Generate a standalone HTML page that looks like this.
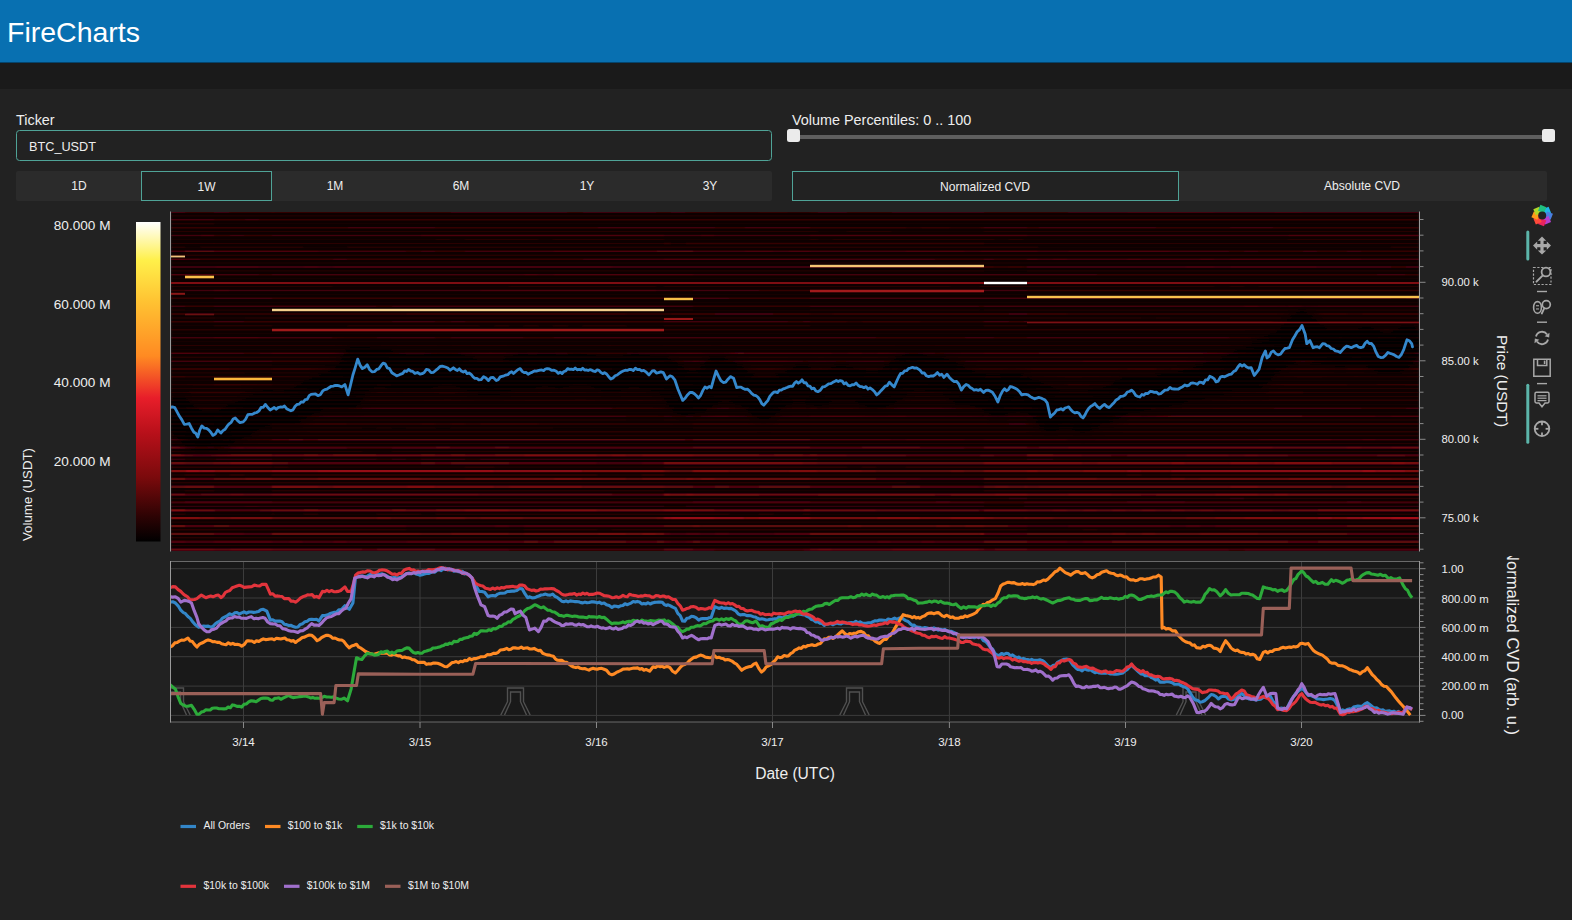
<!DOCTYPE html><html><head><meta charset="utf-8"><title>FireCharts</title>
<style>html,body{margin:0;padding:0;background:#222222;width:1572px;height:920px;overflow:hidden}svg{display:block}</style></head><body>
<svg width="1572" height="920" viewBox="0 0 1572 920" font-family='"Liberation Sans", sans-serif'>
<defs>
<linearGradient id="cb" x1="0" y1="0" x2="0" y2="1">
<stop offset="0" stop-color="#ffffff"/><stop offset="0.12" stop-color="#fff04a"/><stop offset="0.25" stop-color="#ffc232"/>
<stop offset="0.42" stop-color="#ff8a22"/><stop offset="0.55" stop-color="#e81e2a"/><stop offset="0.66" stop-color="#b8101a"/>
<stop offset="0.8" stop-color="#7a0a0c"/><stop offset="0.92" stop-color="#2e0304"/><stop offset="1" stop-color="#000000"/>
</linearGradient>
<filter id="halo" x="-0.1" y="-1" width="1.2" height="3"><feGaussianBlur stdDeviation="7"/></filter>
<filter id="hblur" x="0" y="0" width="1" height="1"><feGaussianBlur stdDeviation="1.0 0.6"/></filter>
<clipPath id="hclip"><rect x="171" y="212" width="1248" height="339"/></clipPath>
<clipPath id="cclip"><rect x="171" y="562" width="1248" height="160"/></clipPath>
<clipPath id="tclip"><rect x="1480" y="556" width="60" height="200"/></clipPath>
</defs>
<rect width="1572" height="920" fill="#222222"/>
<rect width="1572" height="63" fill="#0870b1"/>
<rect y="62.2" width="1572" height="0.8" fill="#063a5c"/>
<rect y="63" width="1572" height="26" fill="#1a1a1a"/>
<text x="7" y="42" font-size="28.5" fill="#ffffff">FireCharts</text>
<text x="16" y="124.7" font-size="14.4" fill="#eeeeee">Ticker</text>
<rect x="16.5" y="130.5" width="755" height="30" rx="3" fill="#222222" stroke="#4fa397" stroke-width="1"/>
<text x="29" y="151" font-size="12.7" fill="#eeeeee">BTC_USDT</text>
<rect x="16" y="171" width="756" height="30" rx="2" fill="#2b2b2b"/>
<rect x="141.5" y="171.5" width="130" height="29" fill="#222222" stroke="#4fa397" stroke-width="1"/>

<text x="79" y="189.9" font-size="12" fill="#eeeeee" text-anchor="middle">1D</text>
<text x="206.5" y="190.8" font-size="12" fill="#eeeeee" text-anchor="middle">1W</text>
<text x="335" y="189.9" font-size="12" fill="#eeeeee" text-anchor="middle">1M</text>
<text x="461" y="189.9" font-size="12" fill="#eeeeee" text-anchor="middle">6M</text>
<text x="587" y="189.9" font-size="12" fill="#eeeeee" text-anchor="middle">1Y</text>
<text x="710" y="189.9" font-size="12" fill="#eeeeee" text-anchor="middle">3Y</text>
<text x="792" y="125.4" font-size="14.4" fill="#eeeeee">Volume Percentiles: 0 .. 100</text>
<rect x="794" y="135" width="755" height="4" fill="#5f5f5f"/>
<rect x="787" y="129" width="13" height="13" rx="2.5" fill="#ebebeb"/>
<rect x="1542" y="129" width="13" height="13" rx="2.5" fill="#ebebeb"/>
<rect x="792" y="171" width="755" height="30" rx="2" fill="#2b2b2b"/>
<rect x="792.5" y="171.5" width="386" height="29" fill="#222222" stroke="#4fa397" stroke-width="1"/>
<text x="985" y="191.2" font-size="12.1" fill="#eeeeee" text-anchor="middle">Normalized CVD</text>
<text x="1362" y="190.2" font-size="12.1" fill="#eeeeee" text-anchor="middle">Absolute CVD</text>
<g clip-path="url(#hclip)"><g filter="url(#hblur)"><rect x="171" y="212" width="1248" height="339" fill="#0a0002"/>
<path fill="rgb(25,1,3)" d="M214 223.1h1205.0v1.4h-1205.0zM817.8 230.9h29.4v1.4h-29.4zM891.3 230.9h92.7v1.4h-92.7zM171 238.8h264.6v1.4h-264.6zM450.3 238.8h14.7v1.4h-14.7zM538.5 238.8h14.7v1.4h-14.7zM664 238.8h146.0v1.4h-146.0zM817.8 238.8h14.7v1.4h-14.7zM994.2 238.8h14.7v1.4h-14.7zM1023.6 238.8h264.6v1.4h-264.6zM185 246.6h15.4v1.4h-15.4zM303.3 246.6h44.1v1.4h-44.1zM1038.3 246.6h352.8v1.4h-352.8zM171 262.3h1248.0v1.4h-1248.0zM984 270.2h43.0v1.4h-43.0zM171 278.0h1248.0v1.4h-1248.0zM332.7 285.9h176.4v1.4h-176.4zM656.1 285.9h7.9v1.4h-7.9zM950.1 285.9h29.4v1.4h-29.4zM1214.7 285.9h14.7v1.4h-14.7zM1244.1 285.9h14.7v1.4h-14.7zM171 293.7h1248.0v1.4h-1248.0zM171 301.6h1248.0v1.4h-1248.0zM185 309.4h29.0v1.4h-29.0zM693 309.4h117.0v1.4h-117.0zM979.5 309.4h4.5v1.4h-4.5zM215.1 317.3h29.4v1.4h-29.4zM1141.2 317.3h14.7v1.4h-14.7zM1170.6 317.3h58.8v1.4h-58.8zM171 325.1h43.0v1.4h-43.0zM272 325.1h75.4v1.4h-75.4zM479.7 325.1h14.7v1.4h-14.7zM509.1 325.1h14.7v1.4h-14.7zM538.5 325.1h14.7v1.4h-14.7zM567.9 325.1h14.7v1.4h-14.7zM626.7 325.1h37.3v1.4h-37.3zM810 325.1h174.0v1.4h-174.0zM1027 325.1h392.0v1.4h-392.0zM171 333.0h1248.0v1.4h-1248.0zM171 340.8h1248.0v1.4h-1248.0zM171 348.7h1248.0v1.4h-1248.0zM272 364.4h237.1v1.4h-237.1zM664 364.4h6.8v1.4h-6.8zM244.5 372.2h27.5v1.4h-27.5zM171 380.1h1248.0v1.4h-1248.0zM171 403.6h1248.0v1.4h-1248.0zM171 411.5h1248.0v1.4h-1248.0zM626.7 419.3h37.3v1.4h-37.3zM214 427.2h58.0v1.4h-58.0zM362.1 427.2h14.7v1.4h-14.7zM391.5 427.2h14.7v1.4h-14.7zM435.6 427.2h14.7v1.4h-14.7zM553.2 427.2h139.8v1.4h-139.8zM362.1 450.7h29.4v1.4h-29.4zM906 482.1h78.0v1.4h-78.0zM171 490.0h14.0v1.4h-14.0zM214 490.0h58.0v1.4h-58.0zM664 490.0h320.0v1.4h-320.0zM185.7 513.5h86.3v1.4h-86.3zM273.9 513.5h29.4v1.4h-29.4zM318 513.5h58.8v1.4h-58.8zM420.9 513.5h14.7v1.4h-14.7zM729.6 513.5h29.4v1.4h-29.4zM773.7 513.5h29.4v1.4h-29.4zM810 513.5h507.6v1.4h-507.6zM171 560.6h1248.0v1.4h-1248.0z"/>
<path fill="rgb(38,2,5)" d="M171 215.2h1248.0v1.4h-1248.0zM171 223.1h43.0v1.4h-43.0zM171 230.9h646.8v1.4h-646.8zM847.2 230.9h44.1v1.4h-44.1zM984 230.9h435.0v1.4h-435.0zM435.6 238.8h14.7v1.4h-14.7zM465 238.8h73.5v1.4h-73.5zM553.2 238.8h110.8v1.4h-110.8zM810 238.8h7.8v1.4h-7.8zM832.5 238.8h161.7v1.4h-161.7zM1008.9 238.8h14.7v1.4h-14.7zM1288.2 238.8h130.8v1.4h-130.8zM171 246.6h14.0v1.4h-14.0zM200.4 246.6h102.9v1.4h-102.9zM347.4 246.6h690.9v1.4h-690.9zM1391.1 246.6h27.9v1.4h-27.9zM171 254.5h1248.0v1.4h-1248.0zM171 270.2h813.0v1.4h-813.0zM1027 270.2h392.0v1.4h-392.0zM171 285.9h161.7v1.4h-161.7zM509.1 285.9h147.0v1.4h-147.0zM664 285.9h286.1v1.4h-286.1zM979.5 285.9h235.2v1.4h-235.2zM1229.4 285.9h14.7v1.4h-14.7zM1258.8 285.9h160.2v1.4h-160.2zM171 309.4h14.0v1.4h-14.0zM214 309.4h479.0v1.4h-479.0zM810 309.4h169.5v1.4h-169.5zM984 309.4h435.0v1.4h-435.0zM171 317.3h44.1v1.4h-44.1zM244.5 317.3h896.7v1.4h-896.7zM1155.9 317.3h14.7v1.4h-14.7zM1229.4 317.3h189.6v1.4h-189.6zM214 325.1h58.0v1.4h-58.0zM347.4 325.1h132.3v1.4h-132.3zM494.4 325.1h14.7v1.4h-14.7zM523.8 325.1h14.7v1.4h-14.7zM553.2 325.1h14.7v1.4h-14.7zM582.6 325.1h44.1v1.4h-44.1zM664 325.1h146.0v1.4h-146.0zM984 325.1h43.0v1.4h-43.0zM171 356.5h1248.0v1.4h-1248.0zM171 364.4h101.0v1.4h-101.0zM509.1 364.4h154.9v1.4h-154.9zM670.8 364.4h748.2v1.4h-748.2zM171 372.2h73.5v1.4h-73.5zM272 372.2h1147.0v1.4h-1147.0zM171 387.9h1248.0v1.4h-1248.0zM171 395.8h1248.0v1.4h-1248.0zM171 419.3h455.7v1.4h-455.7zM664 419.3h755.0v1.4h-755.0zM171 427.2h43.0v1.4h-43.0zM272 427.2h90.1v1.4h-90.1zM376.8 427.2h14.7v1.4h-14.7zM406.2 427.2h29.4v1.4h-29.4zM450.3 427.2h102.9v1.4h-102.9zM693 427.2h726.0v1.4h-726.0zM171 435.0h1248.0v1.4h-1248.0zM171 442.9h1248.0v1.4h-1248.0zM171 450.7h191.1v1.4h-191.1zM391.5 450.7h1027.5v1.4h-1027.5zM185 458.6h30.1v1.4h-30.1zM272 458.6h31.3v1.4h-31.3zM376.8 458.6h14.7v1.4h-14.7zM406.2 458.6h14.7v1.4h-14.7zM465 458.6h14.7v1.4h-14.7zM817.8 458.6h209.2v1.4h-209.2zM1053 458.6h366.0v1.4h-366.0zM272 466.4h1.9v1.4h-1.9zM288.6 466.4h176.4v1.4h-176.4zM494.4 466.4h169.6v1.4h-169.6zM847.2 466.4h14.7v1.4h-14.7zM876.6 466.4h29.4v1.4h-29.4zM171 474.3h14.0v1.4h-14.0zM215.1 474.3h14.7v1.4h-14.7zM244.5 474.3h27.5v1.4h-27.5zM597.3 474.3h44.1v1.4h-44.1zM664 474.3h462.5v1.4h-462.5zM1141.2 474.3h29.4v1.4h-29.4zM171 482.1h735.0v1.4h-735.0zM984 482.1h435.0v1.4h-435.0zM185 490.0h29.0v1.4h-29.0zM272 490.0h392.0v1.4h-392.0zM984 490.0h435.0v1.4h-435.0zM171 497.8h837.9v1.4h-837.9zM1027 497.8h202.4v1.4h-202.4zM1244.1 497.8h174.9v1.4h-174.9zM664 505.7h21.5v1.4h-21.5zM984 505.7h39.6v1.4h-39.6zM171 513.5h14.7v1.4h-14.7zM272 513.5h1.9v1.4h-1.9zM303.3 513.5h14.7v1.4h-14.7zM376.8 513.5h44.1v1.4h-44.1zM435.6 513.5h294.0v1.4h-294.0zM759 513.5h14.7v1.4h-14.7zM803.1 513.5h6.9v1.4h-6.9zM1317.6 513.5h101.4v1.4h-101.4zM171 521.4h1248.0v1.4h-1248.0zM406.2 529.2h117.6v1.4h-117.6zM597.3 529.2h14.7v1.4h-14.7zM1027 529.2h55.4v1.4h-55.4zM1097.1 529.2h132.3v1.4h-132.3zM171 537.1h1248.0v1.4h-1248.0zM171 544.9h1248.0v1.4h-1248.0zM214 552.8h15.8v1.4h-15.8zM273.9 552.8h390.1v1.4h-390.1zM670.8 552.8h14.7v1.4h-14.7zM693 552.8h117.0v1.4h-117.0zM861.9 552.8h14.7v1.4h-14.7zM984 552.8h435.0v1.4h-435.0z"/>
<path fill="rgb(52,3,7)" d="M171 458.6h14.0v1.4h-14.0zM215.1 458.6h56.9v1.4h-56.9zM303.3 458.6h73.5v1.4h-73.5zM391.5 458.6h14.7v1.4h-14.7zM420.9 458.6h44.1v1.4h-44.1zM479.7 458.6h338.1v1.4h-338.1zM1027 458.6h26.0v1.4h-26.0zM171 466.4h101.0v1.4h-101.0zM273.9 466.4h14.7v1.4h-14.7zM465 466.4h29.4v1.4h-29.4zM664 466.4h183.2v1.4h-183.2zM861.9 466.4h14.7v1.4h-14.7zM906 466.4h513.0v1.4h-513.0zM185 474.3h30.1v1.4h-30.1zM229.8 474.3h14.7v1.4h-14.7zM272 474.3h325.3v1.4h-325.3zM641.4 474.3h22.6v1.4h-22.6zM1126.5 474.3h14.7v1.4h-14.7zM1170.6 474.3h248.4v1.4h-248.4zM1008.9 497.8h18.1v1.4h-18.1zM1229.4 497.8h14.7v1.4h-14.7zM171 505.7h73.5v1.4h-73.5zM259.2 505.7h404.8v1.4h-404.8zM685.5 505.7h298.5v1.4h-298.5zM1023.6 505.7h395.4v1.4h-395.4zM171 529.2h235.2v1.4h-235.2zM523.8 529.2h73.5v1.4h-73.5zM612 529.2h415.0v1.4h-415.0zM1082.4 529.2h14.7v1.4h-14.7zM1229.4 529.2h189.6v1.4h-189.6zM171 552.8h43.0v1.4h-43.0zM229.8 552.8h44.1v1.4h-44.1zM664 552.8h6.8v1.4h-6.8zM685.5 552.8h7.5v1.4h-7.5zM810 552.8h51.9v1.4h-51.9zM876.6 552.8h107.4v1.4h-107.4z"/>
<path fill="rgb(65,5,9)" d="M244.5 505.7h14.7v1.4h-14.7z"/>
<path fill="rgb(42,2,4)" d="M906 226.9h14.7v1.5h-14.7zM950.1 226.9h29.4v1.5h-29.4zM171 242.7h43.0v1.5h-43.0zM215.1 242.7h448.9v1.5h-448.9zM670.8 242.7h14.7v1.5h-14.7zM984 242.7h435.0v1.5h-435.0zM171 281.9h14.0v1.5h-14.0zM272 281.9h413.5v1.5h-413.5zM693 281.9h7.2v1.5h-7.2zM714.9 281.9h14.7v1.5h-14.7zM810 281.9h37.2v1.5h-37.2zM861.9 281.9h122.1v1.5h-122.1zM1027 281.9h392.0v1.5h-392.0zM847.2 321.1h14.7v1.5h-14.7zM920.7 321.1h63.3v1.5h-63.3zM1273.5 321.1h44.1v1.5h-44.1zM171 329.0h1248.0v1.5h-1248.0zM171 344.7h1248.0v1.5h-1248.0zM185 376.1h479.0v1.5h-479.0zM803.1 376.1h6.9v1.5h-6.9zM1027 376.1h392.0v1.5h-392.0zM171 383.9h43.0v1.5h-43.0zM272 383.9h104.8v1.5h-104.8zM391.5 383.9h272.5v1.5h-272.5zM693 383.9h198.3v1.5h-198.3zM984 383.9h24.9v1.5h-24.9zM1053 383.9h14.7v1.5h-14.7zM1111.8 383.9h14.7v1.5h-14.7zM1214.7 383.9h44.1v1.5h-44.1zM1347 383.9h29.4v1.5h-29.4zM332.7 391.8h44.1v1.5h-44.1zM567.9 391.8h29.4v1.5h-29.4zM626.7 391.8h58.8v1.5h-58.8zM847.2 391.8h14.7v1.5h-14.7zM1302.9 391.8h116.1v1.5h-116.1zM171 399.6h514.5v1.5h-514.5zM693 399.6h51.3v1.5h-51.3zM759 399.6h14.7v1.5h-14.7zM810 399.6h609.0v1.5h-609.0zM171 431.0h1248.0v1.5h-1248.0z"/>
<path fill="rgb(54,3,6)" d="M714.9 211.2h44.1v1.5h-44.1zM788.4 211.2h21.6v1.5h-21.6zM214 219.1h30.5v1.5h-30.5zM259.2 219.1h1159.8v1.5h-1159.8zM171 226.9h176.4v1.5h-176.4zM435.6 226.9h161.7v1.5h-161.7zM714.9 226.9h29.4v1.5h-29.4zM810 226.9h96.0v1.5h-96.0zM920.7 226.9h29.4v1.5h-29.4zM979.5 226.9h4.5v1.5h-4.5zM1027 226.9h11.3v1.5h-11.3zM1155.9 226.9h73.5v1.5h-73.5zM1273.5 226.9h145.5v1.5h-145.5zM214 234.8h15.8v1.5h-15.8zM244.5 234.8h27.5v1.5h-27.5zM214 242.7h1.1v1.5h-1.1zM664 242.7h6.8v1.5h-6.8zM685.5 242.7h298.5v1.5h-298.5zM406.2 250.5h14.7v1.5h-14.7zM435.6 250.5h29.4v1.5h-29.4zM1229.4 250.5h14.7v1.5h-14.7zM1258.8 250.5h44.1v1.5h-44.1zM1317.6 250.5h29.4v1.5h-29.4zM1361.7 250.5h57.3v1.5h-57.3zM200.4 258.4h132.3v1.5h-132.3zM347.4 258.4h235.2v1.5h-235.2zM935.4 258.4h48.6v1.5h-48.6zM994.2 258.4h32.8v1.5h-32.8zM994.2 266.2h14.7v1.5h-14.7zM1023.6 266.2h3.4v1.5h-3.4zM259.2 274.1h12.8v1.5h-12.8zM1097.1 274.1h279.3v1.5h-279.3zM1405.8 274.1h13.2v1.5h-13.2zM185 281.9h87.0v1.5h-87.0zM685.5 281.9h7.5v1.5h-7.5zM700.2 281.9h14.7v1.5h-14.7zM729.6 281.9h80.4v1.5h-80.4zM847.2 281.9h14.7v1.5h-14.7zM984 281.9h43.0v1.5h-43.0zM171 289.8h14.0v1.5h-14.0zM670.8 289.8h22.2v1.5h-22.2zM759 289.8h51.0v1.5h-51.0zM1027 289.8h392.0v1.5h-392.0zM171 297.6h43.0v1.5h-43.0zM272 297.6h421.0v1.5h-421.0zM729.6 297.6h80.4v1.5h-80.4zM1111.8 297.6h191.1v1.5h-191.1zM1391.1 297.6h14.7v1.5h-14.7zM185 305.4h29.0v1.5h-29.0zM376.8 305.4h14.7v1.5h-14.7zM693 305.4h117.0v1.5h-117.0zM979.5 305.4h4.5v1.5h-4.5zM214 313.3h192.2v1.5h-192.2zM626.7 313.3h44.1v1.5h-44.1zM810 313.3h22.5v1.5h-22.5zM1067.7 313.3h249.9v1.5h-249.9zM1347 313.3h14.7v1.5h-14.7zM171 321.1h43.0v1.5h-43.0zM244.5 321.1h147.0v1.5h-147.0zM435.6 321.1h14.7v1.5h-14.7zM465 321.1h199.0v1.5h-199.0zM788.4 321.1h14.7v1.5h-14.7zM810 321.1h37.2v1.5h-37.2zM861.9 321.1h58.8v1.5h-58.8zM1008.9 321.1h14.7v1.5h-14.7zM1027 321.1h246.5v1.5h-246.5zM1317.6 321.1h101.4v1.5h-101.4zM332.7 336.9h44.1v1.5h-44.1zM435.6 336.9h14.7v1.5h-14.7zM523.8 336.9h29.4v1.5h-29.4zM876.6 336.9h88.2v1.5h-88.2zM994.2 336.9h32.8v1.5h-32.8zM1229.4 336.9h189.6v1.5h-189.6zM244.5 352.5h14.7v1.5h-14.7zM272 360.4h251.8v1.5h-251.8zM664 360.4h6.8v1.5h-6.8zM891.3 360.4h14.7v1.5h-14.7zM950.1 360.4h14.7v1.5h-14.7zM229.8 368.2h42.2v1.5h-42.2zM362.1 368.2h29.4v1.5h-29.4zM538.5 368.2h58.8v1.5h-58.8zM612 368.2h14.7v1.5h-14.7zM171 376.1h14.0v1.5h-14.0zM664 376.1h139.1v1.5h-139.1zM810 376.1h217.0v1.5h-217.0zM214 383.9h58.0v1.5h-58.0zM376.8 383.9h14.7v1.5h-14.7zM664 383.9h29.0v1.5h-29.0zM891.3 383.9h92.7v1.5h-92.7zM1008.9 383.9h44.1v1.5h-44.1zM1067.7 383.9h44.1v1.5h-44.1zM1126.5 383.9h88.2v1.5h-88.2zM1258.8 383.9h88.2v1.5h-88.2zM1376.4 383.9h42.6v1.5h-42.6zM171 391.8h88.2v1.5h-88.2zM272 391.8h60.7v1.5h-60.7zM376.8 391.8h191.1v1.5h-191.1zM597.3 391.8h29.4v1.5h-29.4zM685.5 391.8h161.7v1.5h-161.7zM861.9 391.8h441.0v1.5h-441.0zM685.5 399.6h7.5v1.5h-7.5zM744.3 399.6h14.7v1.5h-14.7zM773.7 399.6h36.3v1.5h-36.3zM185 407.5h0.7v1.5h-0.7zM272 407.5h75.4v1.5h-75.4zM612 407.5h81.0v1.5h-81.0zM729.6 407.5h80.4v1.5h-80.4zM817.8 407.5h58.8v1.5h-58.8zM1038.3 407.5h73.5v1.5h-73.5zM1155.9 407.5h117.6v1.5h-117.6zM1361.7 407.5h44.1v1.5h-44.1zM626.7 415.4h37.3v1.5h-37.3zM214 423.2h58.0v1.5h-58.0zM347.4 423.2h73.5v1.5h-73.5zM435.6 423.2h14.7v1.5h-14.7zM465 423.2h14.7v1.5h-14.7zM538.5 423.2h154.5v1.5h-154.5zM229.8 438.9h42.2v1.5h-42.2zM984 501.3h39.6v2.3h-39.6z"/>
<path fill="rgb(66,4,8)" d="M185 211.2h29.0v1.5h-29.0zM229.8 211.2h42.2v1.5h-42.2zM273.9 211.2h176.4v1.5h-176.4zM567.9 211.2h14.7v1.5h-14.7zM656.1 211.2h14.7v1.5h-14.7zM685.5 211.2h29.4v1.5h-29.4zM759 211.2h29.4v1.5h-29.4zM810 211.2h7.8v1.5h-7.8zM847.2 211.2h44.1v1.5h-44.1zM984 211.2h83.7v1.5h-83.7zM171 219.1h43.0v1.5h-43.0zM244.5 219.1h14.7v1.5h-14.7zM347.4 226.9h88.2v1.5h-88.2zM597.3 226.9h117.6v1.5h-117.6zM744.3 226.9h65.7v1.5h-65.7zM984 226.9h43.0v1.5h-43.0zM1038.3 226.9h117.6v1.5h-117.6zM1229.4 226.9h44.1v1.5h-44.1zM171 234.8h29.4v1.5h-29.4zM229.8 234.8h14.7v1.5h-14.7zM272 234.8h148.9v1.5h-148.9zM664 234.8h36.2v1.5h-36.2zM714.9 234.8h95.1v1.5h-95.1zM1027 234.8h261.2v1.5h-261.2zM171 250.5h14.0v1.5h-14.0zM318 250.5h88.2v1.5h-88.2zM420.9 250.5h14.7v1.5h-14.7zM465 250.5h88.2v1.5h-88.2zM693 250.5h51.3v1.5h-51.3zM773.7 250.5h14.7v1.5h-14.7zM810 250.5h96.0v1.5h-96.0zM964.8 250.5h14.7v1.5h-14.7zM1038.3 250.5h29.4v1.5h-29.4zM1170.6 250.5h58.8v1.5h-58.8zM1244.1 250.5h14.7v1.5h-14.7zM1302.9 250.5h14.7v1.5h-14.7zM1347 250.5h14.7v1.5h-14.7zM185 258.4h15.4v1.5h-15.4zM332.7 258.4h14.7v1.5h-14.7zM582.6 258.4h81.4v1.5h-81.4zM810 258.4h125.4v1.5h-125.4zM984 258.4h10.2v1.5h-10.2zM1038.3 258.4h14.7v1.5h-14.7zM1067.7 258.4h58.8v1.5h-58.8zM1141.2 258.4h58.8v1.5h-58.8zM1214.7 258.4h14.7v1.5h-14.7zM1361.7 258.4h57.3v1.5h-57.3zM984 266.2h10.2v1.5h-10.2zM1008.9 266.2h14.7v1.5h-14.7zM1391.1 266.2h14.7v1.5h-14.7zM214 274.1h45.2v1.5h-45.2zM272 274.1h251.8v1.5h-251.8zM538.5 274.1h14.7v1.5h-14.7zM693 274.1h404.1v1.5h-404.1zM1376.4 274.1h29.4v1.5h-29.4zM185 289.8h29.0v1.5h-29.0zM229.8 289.8h249.9v1.5h-249.9zM656.1 289.8h14.7v1.5h-14.7zM693 289.8h66.0v1.5h-66.0zM810 289.8h81.3v1.5h-81.3zM920.7 289.8h58.8v1.5h-58.8zM984 289.8h43.0v1.5h-43.0zM214 297.6h58.0v1.5h-58.0zM693 297.6h36.6v1.5h-36.6zM810 297.6h301.8v1.5h-301.8zM1302.9 297.6h88.2v1.5h-88.2zM1405.8 297.6h13.2v1.5h-13.2zM171 305.4h14.0v1.5h-14.0zM214 305.4h162.8v1.5h-162.8zM391.5 305.4h301.5v1.5h-301.5zM810 305.4h169.5v1.5h-169.5zM984 305.4h260.1v1.5h-260.1zM1258.8 305.4h29.4v1.5h-29.4zM1302.9 305.4h116.1v1.5h-116.1zM171 313.3h14.7v1.5h-14.7zM406.2 313.3h220.5v1.5h-220.5zM670.8 313.3h44.1v1.5h-44.1zM773.7 313.3h36.3v1.5h-36.3zM832.5 313.3h176.4v1.5h-176.4zM1027 313.3h40.7v1.5h-40.7zM1317.6 313.3h29.4v1.5h-29.4zM1361.7 313.3h57.3v1.5h-57.3zM214 321.1h30.5v1.5h-30.5zM391.5 321.1h44.1v1.5h-44.1zM450.3 321.1h14.7v1.5h-14.7zM664 321.1h124.4v1.5h-124.4zM803.1 321.1h6.9v1.5h-6.9zM984 321.1h24.9v1.5h-24.9zM1023.6 321.1h3.4v1.5h-3.4zM171 336.9h43.0v1.5h-43.0zM259.2 336.9h73.5v1.5h-73.5zM376.8 336.9h58.8v1.5h-58.8zM450.3 336.9h73.5v1.5h-73.5zM553.2 336.9h323.4v1.5h-323.4zM964.8 336.9h29.4v1.5h-29.4zM1027 336.9h202.4v1.5h-202.4zM200.4 352.5h44.1v1.5h-44.1zM259.2 352.5h12.8v1.5h-12.8zM567.9 352.5h58.8v1.5h-58.8zM832.5 352.5h14.7v1.5h-14.7zM861.9 352.5h14.7v1.5h-14.7zM935.4 352.5h48.6v1.5h-48.6zM171 360.4h101.0v1.5h-101.0zM523.8 360.4h140.2v1.5h-140.2zM670.8 360.4h22.2v1.5h-22.2zM803.1 360.4h88.2v1.5h-88.2zM906 360.4h44.1v1.5h-44.1zM964.8 360.4h117.6v1.5h-117.6zM171 368.2h58.8v1.5h-58.8zM272 368.2h90.1v1.5h-90.1zM391.5 368.2h147.0v1.5h-147.0zM597.3 368.2h14.7v1.5h-14.7zM626.7 368.2h183.3v1.5h-183.3zM847.2 368.2h44.1v1.5h-44.1zM906 368.2h220.5v1.5h-220.5zM1155.9 368.2h14.7v1.5h-14.7zM1244.1 368.2h14.7v1.5h-14.7zM1288.2 368.2h58.8v1.5h-58.8zM259.2 391.8h12.8v1.5h-12.8zM171 407.5h14.0v1.5h-14.0zM185.7 407.5h86.3v1.5h-86.3zM347.4 407.5h264.6v1.5h-264.6zM693 407.5h36.6v1.5h-36.6zM810 407.5h7.8v1.5h-7.8zM876.6 407.5h161.7v1.5h-161.7zM1111.8 407.5h44.1v1.5h-44.1zM1273.5 407.5h88.2v1.5h-88.2zM1405.8 407.5h13.2v1.5h-13.2zM171 415.4h14.0v1.5h-14.0zM200.4 415.4h13.6v1.5h-13.6zM272 415.4h354.7v1.5h-354.7zM664 415.4h21.5v1.5h-21.5zM693 415.4h7.2v1.5h-7.2zM729.6 415.4h80.4v1.5h-80.4zM906 415.4h78.0v1.5h-78.0zM1376.4 415.4h14.7v1.5h-14.7zM171 423.2h29.4v1.5h-29.4zM272 423.2h75.4v1.5h-75.4zM420.9 423.2h14.7v1.5h-14.7zM450.3 423.2h14.7v1.5h-14.7zM479.7 423.2h58.8v1.5h-58.8zM693 423.2h315.9v1.5h-315.9zM1027 423.2h392.0v1.5h-392.0zM185 438.9h44.8v1.5h-44.8zM891.3 438.9h14.7v1.5h-14.7zM964.8 438.9h19.2v1.5h-19.2zM1067.7 438.9h191.1v1.5h-191.1zM1332.3 438.9h29.4v1.5h-29.4zM1376.4 438.9h42.6v1.5h-42.6zM347.4 446.4h44.1v2.3h-44.1zM964.8 446.4h19.2v2.3h-19.2zM597.3 462.1h44.1v2.3h-44.1zM920.7 477.8h63.3v2.3h-63.3zM979.5 485.6h4.5v2.3h-4.5zM171 501.3h14.0v2.3h-14.0zM272 501.3h421.0v2.3h-421.0zM810 501.3h125.4v2.3h-125.4zM950.1 501.3h33.9v2.3h-33.9zM1023.6 501.3h102.9v2.3h-102.9zM1185.3 501.3h161.7v2.3h-161.7zM1361.7 501.3h57.3v2.3h-57.3zM406.2 524.9h88.2v2.3h-88.2zM509.1 524.9h14.7v2.3h-14.7zM1027 524.9h40.7v2.3h-40.7zM1170.6 524.9h14.7v2.3h-14.7zM1200 524.9h14.7v2.3h-14.7zM244.5 532.7h27.5v2.3h-27.5zM670.8 532.7h14.7v2.3h-14.7zM700.2 532.7h14.7v2.3h-14.7zM729.6 532.7h44.1v2.3h-44.1zM185 540.6h29.0v2.3h-29.0zM272 540.6h16.6v2.3h-16.6zM303.3 540.6h29.4v2.3h-29.4zM347.4 540.6h58.8v2.3h-58.8zM670.8 540.6h14.7v2.3h-14.7zM810 540.6h66.6v2.3h-66.6zM891.3 540.6h29.4v2.3h-29.4zM935.4 540.6h48.6v2.3h-48.6zM1067.7 540.6h14.7v2.3h-14.7zM509.1 548.4h154.9v2.3h-154.9zM714.9 548.4h88.2v2.3h-88.2zM1229.4 548.4h14.7v2.3h-14.7zM200.4 556.2h13.6v2.3h-13.6z"/>
<path fill="rgb(78,6,10)" d="M214 211.2h15.8v1.5h-15.8zM272 211.2h1.9v1.5h-1.9zM450.3 211.2h117.6v1.5h-117.6zM582.6 211.2h73.5v1.5h-73.5zM670.8 211.2h14.7v1.5h-14.7zM817.8 211.2h29.4v1.5h-29.4zM891.3 211.2h92.7v1.5h-92.7zM1067.7 211.2h58.8v1.5h-58.8zM1214.7 211.2h58.8v1.5h-58.8zM1302.9 211.2h116.1v1.5h-116.1zM200.4 234.8h13.6v1.5h-13.6zM420.9 234.8h243.1v1.5h-243.1zM700.2 234.8h14.7v1.5h-14.7zM810 234.8h217.0v1.5h-217.0zM1288.2 234.8h130.8v1.5h-130.8zM214 250.5h104.0v1.5h-104.0zM553.2 250.5h102.9v1.5h-102.9zM744.3 250.5h29.4v1.5h-29.4zM788.4 250.5h21.6v1.5h-21.6zM906 250.5h58.8v1.5h-58.8zM979.5 250.5h58.8v1.5h-58.8zM1067.7 250.5h102.9v1.5h-102.9zM171 258.4h14.0v1.5h-14.0zM664 258.4h146.0v1.5h-146.0zM1027 258.4h11.3v1.5h-11.3zM1053 258.4h14.7v1.5h-14.7zM1126.5 258.4h14.7v1.5h-14.7zM1200 258.4h14.7v1.5h-14.7zM1229.4 258.4h132.3v1.5h-132.3zM171 266.2h44.1v1.5h-44.1zM259.2 266.2h44.1v1.5h-44.1zM318 266.2h14.7v1.5h-14.7zM612 266.2h323.4v1.5h-323.4zM950.1 266.2h14.7v1.5h-14.7zM1027 266.2h158.3v1.5h-158.3zM1214.7 266.2h14.7v1.5h-14.7zM1317.6 266.2h73.5v1.5h-73.5zM1405.8 266.2h13.2v1.5h-13.2zM171 274.1h43.0v1.5h-43.0zM523.8 274.1h14.7v1.5h-14.7zM553.2 274.1h139.8v1.5h-139.8zM214 289.8h15.8v1.5h-15.8zM479.7 289.8h176.4v1.5h-176.4zM891.3 289.8h29.4v1.5h-29.4zM979.5 289.8h4.5v1.5h-4.5zM1244.1 305.4h14.7v1.5h-14.7zM1288.2 305.4h14.7v1.5h-14.7zM185.7 313.3h28.3v1.5h-28.3zM714.9 313.3h58.8v1.5h-58.8zM1008.9 313.3h18.1v1.5h-18.1zM214 336.9h45.2v1.5h-45.2zM171 352.5h29.4v1.5h-29.4zM272 352.5h295.9v1.5h-295.9zM626.7 352.5h102.9v1.5h-102.9zM744.3 352.5h88.2v1.5h-88.2zM847.2 352.5h14.7v1.5h-14.7zM876.6 352.5h58.8v1.5h-58.8zM984 352.5h54.3v1.5h-54.3zM1258.8 352.5h14.7v1.5h-14.7zM1391.1 352.5h14.7v1.5h-14.7zM693 360.4h110.1v1.5h-110.1zM1082.4 360.4h336.6v1.5h-336.6zM810 368.2h37.2v1.5h-37.2zM891.3 368.2h14.7v1.5h-14.7zM1126.5 368.2h29.4v1.5h-29.4zM1170.6 368.2h73.5v1.5h-73.5zM1258.8 368.2h29.4v1.5h-29.4zM1347 368.2h72.0v1.5h-72.0zM185 415.4h15.4v1.5h-15.4zM214 415.4h58.0v1.5h-58.0zM685.5 415.4h7.5v1.5h-7.5zM700.2 415.4h29.4v1.5h-29.4zM810 415.4h96.0v1.5h-96.0zM984 415.4h43.0v1.5h-43.0zM1053 415.4h58.8v1.5h-58.8zM1141.2 415.4h14.7v1.5h-14.7zM1302.9 415.4h73.5v1.5h-73.5zM1391.1 415.4h27.9v1.5h-27.9zM200.4 423.2h13.6v1.5h-13.6zM1008.9 423.2h18.1v1.5h-18.1zM171 438.9h14.0v1.5h-14.0zM272 438.9h16.6v1.5h-16.6zM303.3 438.9h14.7v1.5h-14.7zM685.5 438.9h7.5v1.5h-7.5zM810 438.9h81.3v1.5h-81.3zM906 438.9h58.8v1.5h-58.8zM984 438.9h83.7v1.5h-83.7zM1258.8 438.9h73.5v1.5h-73.5zM1361.7 438.9h14.7v1.5h-14.7zM214 446.4h15.8v2.3h-15.8zM244.5 446.4h102.9v2.3h-102.9zM391.5 446.4h44.1v2.3h-44.1zM450.3 446.4h44.1v2.3h-44.1zM509.1 446.4h183.9v2.3h-183.9zM810 446.4h51.9v2.3h-51.9zM920.7 446.4h44.1v2.3h-44.1zM1027 446.4h11.3v2.3h-11.3zM906 454.2h73.5v2.3h-73.5zM994.2 454.2h32.8v2.3h-32.8zM1111.8 454.2h14.7v2.3h-14.7zM1288.2 454.2h88.2v2.3h-88.2zM1405.8 454.2h13.2v2.3h-13.2zM288.6 462.1h132.3v2.3h-132.3zM435.6 462.1h14.7v2.3h-14.7zM509.1 462.1h88.2v2.3h-88.2zM641.4 462.1h22.6v2.3h-22.6zM185 477.8h29.0v2.3h-29.0zM876.6 477.8h44.1v2.3h-44.1zM214 485.6h58.0v2.3h-58.0zM693 485.6h21.9v2.3h-21.9zM729.6 485.6h29.4v2.3h-29.4zM810 485.6h81.3v2.3h-81.3zM920.7 485.6h58.8v2.3h-58.8zM185 493.4h15.4v2.3h-15.4zM612 493.4h52.0v2.3h-52.0zM185 501.3h87.0v2.3h-87.0zM693 501.3h117.0v2.3h-117.0zM935.4 501.3h14.7v2.3h-14.7zM1126.5 501.3h58.8v2.3h-58.8zM1347 501.3h14.7v2.3h-14.7zM215.1 509.2h44.1v2.3h-44.1zM979.5 509.2h4.5v2.3h-4.5zM185 524.9h29.0v2.3h-29.0zM229.8 524.9h176.4v2.3h-176.4zM494.4 524.9h14.7v2.3h-14.7zM523.8 524.9h140.2v2.3h-140.2zM1008.9 524.9h18.1v2.3h-18.1zM1067.7 524.9h102.9v2.3h-102.9zM1185.3 524.9h14.7v2.3h-14.7zM1214.7 524.9h132.3v2.3h-132.3zM214 532.7h30.5v2.3h-30.5zM664 532.7h6.8v2.3h-6.8zM685.5 532.7h14.7v2.3h-14.7zM714.9 532.7h14.7v2.3h-14.7zM773.7 532.7h36.3v2.3h-36.3zM984 532.7h43.0v2.3h-43.0zM1347 532.7h72.0v2.3h-72.0zM171 540.6h14.0v2.3h-14.0zM214 540.6h58.0v2.3h-58.0zM288.6 540.6h14.7v2.3h-14.7zM332.7 540.6h14.7v2.3h-14.7zM406.2 540.6h117.6v2.3h-117.6zM538.5 540.6h14.7v2.3h-14.7zM626.7 540.6h29.4v2.3h-29.4zM664 540.6h6.8v2.3h-6.8zM685.5 540.6h7.5v2.3h-7.5zM700.2 540.6h109.8v2.3h-109.8zM876.6 540.6h14.7v2.3h-14.7zM920.7 540.6h14.7v2.3h-14.7zM1027 540.6h40.7v2.3h-40.7zM1082.4 540.6h29.4v2.3h-29.4zM1288.2 540.6h29.4v2.3h-29.4zM362.1 548.4h14.7v2.3h-14.7zM435.6 548.4h73.5v2.3h-73.5zM693 548.4h21.9v2.3h-21.9zM803.1 548.4h6.9v2.3h-6.9zM984 548.4h10.2v2.3h-10.2zM1027 548.4h202.4v2.3h-202.4zM1244.1 548.4h174.9v2.3h-174.9zM185 556.2h15.4v2.3h-15.4zM214 556.2h1.1v2.3h-1.1zM259.2 556.2h117.6v2.3h-117.6zM391.5 556.2h14.7v2.3h-14.7zM597.3 556.2h58.8v2.3h-58.8zM832.5 556.2h151.5v2.3h-151.5zM994.2 556.2h32.8v2.3h-32.8z"/>
<path fill="rgb(90,7,12)" d="M171 211.2h14.0v1.5h-14.0zM1126.5 211.2h88.2v1.5h-88.2zM1273.5 211.2h29.4v1.5h-29.4zM185 250.5h29.0v1.5h-29.0zM656.1 250.5h36.9v1.5h-36.9zM215.1 266.2h44.1v1.5h-44.1zM303.3 266.2h14.7v1.5h-14.7zM332.7 266.2h279.3v1.5h-279.3zM935.4 266.2h14.7v1.5h-14.7zM964.8 266.2h19.2v1.5h-19.2zM1185.3 266.2h29.4v1.5h-29.4zM1229.4 266.2h88.2v1.5h-88.2zM729.6 352.5h14.7v1.5h-14.7zM1038.3 352.5h220.5v1.5h-220.5zM1273.5 352.5h117.6v1.5h-117.6zM1405.8 352.5h13.2v1.5h-13.2zM1027 415.4h26.0v1.5h-26.0zM1111.8 415.4h29.4v1.5h-29.4zM1155.9 415.4h147.0v1.5h-147.0zM288.6 438.9h14.7v1.5h-14.7zM318 438.9h367.5v1.5h-367.5zM693 438.9h117.0v1.5h-117.0zM185 446.4h29.0v2.3h-29.0zM229.8 446.4h14.7v2.3h-14.7zM435.6 446.4h14.7v2.3h-14.7zM494.4 446.4h14.7v2.3h-14.7zM693 446.4h117.0v2.3h-117.0zM861.9 446.4h58.8v2.3h-58.8zM984 446.4h43.0v2.3h-43.0zM1038.3 446.4h29.4v2.3h-29.4zM1273.5 446.4h73.5v2.3h-73.5zM1361.7 446.4h29.4v2.3h-29.4zM185 454.2h0.7v2.3h-0.7zM272 454.2h1.9v2.3h-1.9zM847.2 454.2h58.8v2.3h-58.8zM979.5 454.2h14.7v2.3h-14.7zM1082.4 454.2h29.4v2.3h-29.4zM1126.5 454.2h58.8v2.3h-58.8zM1229.4 454.2h14.7v2.3h-14.7zM1258.8 454.2h29.4v2.3h-29.4zM1376.4 454.2h29.4v2.3h-29.4zM185 462.1h29.0v2.3h-29.0zM272 462.1h16.6v2.3h-16.6zM420.9 462.1h14.7v2.3h-14.7zM450.3 462.1h58.8v2.3h-58.8zM817.8 462.1h166.2v2.3h-166.2zM670.8 469.9h22.2v2.3h-22.2zM876.6 469.9h73.5v2.3h-73.5zM964.8 469.9h19.2v2.3h-19.2zM214 477.8h30.5v2.3h-30.5zM272 477.8h46.0v2.3h-46.0zM420.9 477.8h44.1v2.3h-44.1zM626.7 477.8h14.7v2.3h-14.7zM810 477.8h66.6v2.3h-66.6zM984 477.8h43.0v2.3h-43.0zM1097.1 477.8h73.5v2.3h-73.5zM1185.3 477.8h14.7v2.3h-14.7zM171 485.6h14.0v2.3h-14.0zM664 485.6h29.0v2.3h-29.0zM714.9 485.6h14.7v2.3h-14.7zM759 485.6h51.0v2.3h-51.0zM891.3 485.6h29.4v2.3h-29.4zM984 485.6h10.2v2.3h-10.2zM1008.9 485.6h14.7v2.3h-14.7zM1027 485.6h11.3v2.3h-11.3zM1332.3 485.6h14.7v2.3h-14.7zM200.4 493.4h29.4v2.3h-29.4zM244.5 493.4h27.5v2.3h-27.5zM479.7 493.4h132.3v2.3h-132.3zM214 509.2h1.1v2.3h-1.1zM259.2 509.2h12.8v2.3h-12.8zM876.6 509.2h102.9v2.3h-102.9zM1027 509.2h26.0v2.3h-26.0zM1067.7 509.2h14.7v2.3h-14.7zM1097.1 509.2h14.7v2.3h-14.7zM1126.5 509.2h14.7v2.3h-14.7zM1155.9 509.2h14.7v2.3h-14.7zM1185.3 509.2h14.7v2.3h-14.7zM1214.7 509.2h14.7v2.3h-14.7zM1273.5 509.2h14.7v2.3h-14.7zM272 517.0h104.8v2.3h-104.8zM391.5 517.0h44.1v2.3h-44.1zM465 517.0h14.7v2.3h-14.7zM523.8 517.0h132.3v2.3h-132.3zM1053 517.0h132.3v2.3h-132.3zM214 524.9h15.8v2.3h-15.8zM664 524.9h29.0v2.3h-29.0zM700.2 524.9h147.0v2.3h-147.0zM861.9 524.9h73.5v2.3h-73.5zM950.1 524.9h14.7v2.3h-14.7zM984 524.9h24.9v2.3h-24.9zM1347 524.9h72.0v2.3h-72.0zM171 532.7h43.0v2.3h-43.0zM420.9 532.7h29.4v2.3h-29.4zM509.1 532.7h14.7v2.3h-14.7zM1027 532.7h84.8v2.3h-84.8zM1126.5 532.7h14.7v2.3h-14.7zM1155.9 532.7h44.1v2.3h-44.1zM1258.8 532.7h88.2v2.3h-88.2zM523.8 540.6h14.7v2.3h-14.7zM553.2 540.6h73.5v2.3h-73.5zM656.1 540.6h7.9v2.3h-7.9zM693 540.6h7.2v2.3h-7.2zM984 540.6h43.0v2.3h-43.0zM1111.8 540.6h176.4v2.3h-176.4zM1317.6 540.6h101.4v2.3h-101.4zM214 548.4h15.8v2.3h-15.8zM272 548.4h90.1v2.3h-90.1zM376.8 548.4h58.8v2.3h-58.8zM664 548.4h29.0v2.3h-29.0zM810 548.4h7.8v2.3h-7.8zM832.5 548.4h58.8v2.3h-58.8zM979.5 548.4h4.5v2.3h-4.5zM994.2 548.4h32.8v2.3h-32.8zM171 556.2h14.0v2.3h-14.0zM215.1 556.2h44.1v2.3h-44.1zM376.8 556.2h14.7v2.3h-14.7zM406.2 556.2h191.1v2.3h-191.1zM656.1 556.2h7.9v2.3h-7.9zM810 556.2h22.5v2.3h-22.5zM984 556.2h10.2v2.3h-10.2zM1027 556.2h40.7v2.3h-40.7zM1111.8 556.2h14.7v2.3h-14.7z"/>
<path fill="rgb(102,8,14)" d="M171 446.4h14.0v2.3h-14.0zM1067.7 446.4h205.8v2.3h-205.8zM1347 446.4h14.7v2.3h-14.7zM1391.1 446.4h27.9v2.3h-27.9zM185.7 454.2h29.4v2.3h-29.4zM273.9 454.2h29.4v2.3h-29.4zM318 454.2h14.7v2.3h-14.7zM376.8 454.2h44.1v2.3h-44.1zM435.6 454.2h14.7v2.3h-14.7zM465 454.2h29.4v2.3h-29.4zM759 454.2h14.7v2.3h-14.7zM803.1 454.2h6.9v2.3h-6.9zM817.8 454.2h29.4v2.3h-29.4zM1053 454.2h29.4v2.3h-29.4zM1185.3 454.2h44.1v2.3h-44.1zM1244.1 454.2h14.7v2.3h-14.7zM171 462.1h14.0v2.3h-14.0zM215.1 462.1h14.7v2.3h-14.7zM803.1 462.1h14.7v2.3h-14.7zM1082.4 462.1h14.7v2.3h-14.7zM664 469.9h6.8v2.3h-6.8zM861.9 469.9h14.7v2.3h-14.7zM950.1 469.9h14.7v2.3h-14.7zM171 477.8h14.0v2.3h-14.0zM244.5 477.8h27.5v2.3h-27.5zM318 477.8h102.9v2.3h-102.9zM465 477.8h88.2v2.3h-88.2zM582.6 477.8h44.1v2.3h-44.1zM641.4 477.8h44.1v2.3h-44.1zM693 477.8h7.2v2.3h-7.2zM714.9 477.8h95.1v2.3h-95.1zM1027 477.8h70.1v2.3h-70.1zM1170.6 477.8h14.7v2.3h-14.7zM1200 477.8h88.2v2.3h-88.2zM1391.1 477.8h27.9v2.3h-27.9zM185 485.6h29.0v2.3h-29.0zM318 485.6h14.7v2.3h-14.7zM494.4 485.6h14.7v2.3h-14.7zM582.6 485.6h81.4v2.3h-81.4zM994.2 485.6h14.7v2.3h-14.7zM1023.6 485.6h3.4v2.3h-3.4zM1038.3 485.6h191.1v2.3h-191.1zM1258.8 485.6h73.5v2.3h-73.5zM1347 485.6h72.0v2.3h-72.0zM171 493.4h14.0v2.3h-14.0zM229.8 493.4h14.7v2.3h-14.7zM272 493.4h207.7v2.3h-207.7zM759 493.4h58.8v2.3h-58.8zM935.4 493.4h14.7v2.3h-14.7zM1141.2 493.4h14.7v2.3h-14.7zM185 509.2h29.0v2.3h-29.0zM273.9 509.2h29.4v2.3h-29.4zM318 509.2h73.5v2.3h-73.5zM406.2 509.2h29.4v2.3h-29.4zM714.9 509.2h88.2v2.3h-88.2zM810 509.2h66.6v2.3h-66.6zM984 509.2h43.0v2.3h-43.0zM1053 509.2h14.7v2.3h-14.7zM1082.4 509.2h14.7v2.3h-14.7zM1111.8 509.2h14.7v2.3h-14.7zM1141.2 509.2h14.7v2.3h-14.7zM1170.6 509.2h14.7v2.3h-14.7zM1200 509.2h14.7v2.3h-14.7zM1229.4 509.2h44.1v2.3h-44.1zM1288.2 509.2h29.4v2.3h-29.4zM214 517.0h15.8v2.3h-15.8zM376.8 517.0h14.7v2.3h-14.7zM435.6 517.0h29.4v2.3h-29.4zM479.7 517.0h44.1v2.3h-44.1zM656.1 517.0h7.9v2.3h-7.9zM994.2 517.0h29.4v2.3h-29.4zM1027 517.0h26.0v2.3h-26.0zM1185.3 517.0h29.4v2.3h-29.4zM171 524.9h14.0v2.3h-14.0zM693 524.9h7.2v2.3h-7.2zM847.2 524.9h14.7v2.3h-14.7zM935.4 524.9h14.7v2.3h-14.7zM964.8 524.9h19.2v2.3h-19.2zM272 532.7h148.9v2.3h-148.9zM450.3 532.7h58.8v2.3h-58.8zM523.8 532.7h73.5v2.3h-73.5zM626.7 532.7h14.7v2.3h-14.7zM656.1 532.7h7.9v2.3h-7.9zM810 532.7h169.5v2.3h-169.5zM1111.8 532.7h14.7v2.3h-14.7zM1141.2 532.7h14.7v2.3h-14.7zM1200 532.7h58.8v2.3h-58.8zM171 548.4h43.0v2.3h-43.0zM229.8 548.4h42.2v2.3h-42.2zM817.8 548.4h14.7v2.3h-14.7zM891.3 548.4h88.2v2.3h-88.2zM664 556.2h146.0v2.3h-146.0zM1067.7 556.2h44.1v2.3h-44.1zM1126.5 556.2h73.5v2.3h-73.5zM1229.4 556.2h132.3v2.3h-132.3zM1376.4 556.2h42.6v2.3h-42.6z"/>
<path fill="rgb(115,10,16)" d="M171 454.2h14.0v2.3h-14.0zM215.1 454.2h56.9v2.3h-56.9zM303.3 454.2h14.7v2.3h-14.7zM332.7 454.2h44.1v2.3h-44.1zM420.9 454.2h14.7v2.3h-14.7zM450.3 454.2h14.7v2.3h-14.7zM494.4 454.2h29.4v2.3h-29.4zM597.3 454.2h14.7v2.3h-14.7zM626.7 454.2h14.7v2.3h-14.7zM693 454.2h66.0v2.3h-66.0zM773.7 454.2h29.4v2.3h-29.4zM810 454.2h7.8v2.3h-7.8zM1027 454.2h26.0v2.3h-26.0zM214 462.1h1.1v2.3h-1.1zM229.8 462.1h42.2v2.3h-42.2zM664 462.1h139.1v2.3h-139.1zM984 462.1h98.4v2.3h-98.4zM1097.1 462.1h73.5v2.3h-73.5zM1185.3 462.1h44.1v2.3h-44.1zM1258.8 462.1h14.7v2.3h-14.7zM1332.3 462.1h58.8v2.3h-58.8zM1405.8 462.1h13.2v2.3h-13.2zM729.6 469.9h58.8v2.3h-58.8zM817.8 469.9h44.1v2.3h-44.1zM984 469.9h43.0v2.3h-43.0zM1038.3 469.9h44.1v2.3h-44.1zM553.2 477.8h29.4v2.3h-29.4zM685.5 477.8h7.5v2.3h-7.5zM700.2 477.8h14.7v2.3h-14.7zM1288.2 477.8h102.9v2.3h-102.9zM272 485.6h46.0v2.3h-46.0zM332.7 485.6h73.5v2.3h-73.5zM435.6 485.6h58.8v2.3h-58.8zM509.1 485.6h73.5v2.3h-73.5zM1229.4 485.6h29.4v2.3h-29.4zM670.8 493.4h14.7v2.3h-14.7zM693 493.4h66.0v2.3h-66.0zM817.8 493.4h117.6v2.3h-117.6zM950.1 493.4h44.1v2.3h-44.1zM1027 493.4h40.7v2.3h-40.7zM1111.8 493.4h29.4v2.3h-29.4zM1155.9 493.4h58.8v2.3h-58.8zM1258.8 493.4h14.7v2.3h-14.7zM1288.2 493.4h130.8v2.3h-130.8zM272 509.2h1.9v2.3h-1.9zM303.3 509.2h14.7v2.3h-14.7zM391.5 509.2h14.7v2.3h-14.7zM435.6 509.2h29.4v2.3h-29.4zM509.1 509.2h29.4v2.3h-29.4zM597.3 509.2h66.7v2.3h-66.7zM693 509.2h21.9v2.3h-21.9zM803.1 509.2h6.9v2.3h-6.9zM1317.6 509.2h101.4v2.3h-101.4zM200.4 517.0h13.6v2.3h-13.6zM229.8 517.0h42.2v2.3h-42.2zM810 517.0h66.6v2.3h-66.6zM920.7 517.0h29.4v2.3h-29.4zM984 517.0h10.2v2.3h-10.2zM1023.6 517.0h3.4v2.3h-3.4zM1214.7 517.0h29.4v2.3h-29.4zM597.3 532.7h29.4v2.3h-29.4zM641.4 532.7h14.7v2.3h-14.7zM979.5 532.7h4.5v2.3h-4.5zM1200 556.2h29.4v2.3h-29.4zM1361.7 556.2h14.7v2.3h-14.7z"/>
<path fill="rgb(127,11,17)" d="M523.8 454.2h73.5v2.3h-73.5zM612 454.2h14.7v2.3h-14.7zM641.4 454.2h51.6v2.3h-51.6zM1170.6 462.1h14.7v2.3h-14.7zM1229.4 462.1h29.4v2.3h-29.4zM1273.5 462.1h58.8v2.3h-58.8zM1391.1 462.1h14.7v2.3h-14.7zM171 469.9h14.0v2.3h-14.0zM215.1 469.9h56.9v2.3h-56.9zM582.6 469.9h81.4v2.3h-81.4zM693 469.9h36.6v2.3h-36.6zM788.4 469.9h29.4v2.3h-29.4zM1027 469.9h11.3v2.3h-11.3zM1082.4 469.9h44.1v2.3h-44.1zM1141.2 469.9h29.4v2.3h-29.4zM1405.8 469.9h13.2v2.3h-13.2zM406.2 485.6h29.4v2.3h-29.4zM664 493.4h6.8v2.3h-6.8zM685.5 493.4h7.5v2.3h-7.5zM994.2 493.4h32.8v2.3h-32.8zM1067.7 493.4h44.1v2.3h-44.1zM1214.7 493.4h44.1v2.3h-44.1zM1273.5 493.4h14.7v2.3h-14.7zM171 509.2h14.0v2.3h-14.0zM465 509.2h44.1v2.3h-44.1zM538.5 509.2h58.8v2.3h-58.8zM664 509.2h29.0v2.3h-29.0zM171 517.0h29.4v2.3h-29.4zM744.3 517.0h14.7v2.3h-14.7zM876.6 517.0h44.1v2.3h-44.1zM950.1 517.0h33.9v2.3h-33.9zM1244.1 517.0h73.5v2.3h-73.5zM1332.3 517.0h14.7v2.3h-14.7z"/>
<path fill="rgb(139,12,19)" d="M185 469.9h0.7v2.3h-0.7zM200.4 469.9h14.7v2.3h-14.7zM272 469.9h46.0v2.3h-46.0zM494.4 469.9h88.2v2.3h-88.2zM1126.5 469.9h14.7v2.3h-14.7zM1170.6 469.9h191.1v2.3h-191.1zM1376.4 469.9h29.4v2.3h-29.4zM664 517.0h6.8v2.3h-6.8zM714.9 517.0h29.4v2.3h-29.4zM759 517.0h51.0v2.3h-51.0zM1317.6 517.0h14.7v2.3h-14.7zM1347 517.0h14.7v2.3h-14.7z"/>
<path fill="rgb(151,13,21)" d="M185.7 469.9h14.7v2.3h-14.7zM318 469.9h176.4v2.3h-176.4zM1361.7 469.9h14.7v2.3h-14.7zM670.8 517.0h44.1v2.3h-44.1zM1361.7 517.0h29.4v2.3h-29.4z"/>
<path fill="rgb(163,15,23)" d="M1391.1 517.0h27.9v2.3h-27.9z"/>
<path d="M170.0,407.6 L174.8,407.6 L179.5,416.3 L184.3,424.3 L189.1,423.5 L193.9,432.2 L197.8,437.0 L201.8,425.9 L206.6,428.3 L212.9,435.4 L217.7,429.9 L220.9,433.0 L227.3,425.9 L235.2,417.9 L240.0,422.7 L243.2,421.9 L247.9,414.7 L254.3,413.2 L259.1,410.8 L265.4,404.4 L270.2,410.0 L278.1,407.6 L284.5,406.0 L290.9,410.8 L297.2,404.4 L305.2,399.6 L313.1,394.1 L317.9,395.7 L322.7,390.9 L329.0,387.7 L335.4,385.3 L341.8,386.9 L344.9,384.5 L348.1,394.9 L352.9,375.0 L357.7,359.1 L362.4,368.6 L367.2,364.7 L372.0,371.8 L376.7,369.4 L383.1,363.1 L389.5,368.6 L394.2,374.2 L399.0,375.0 L408.5,369.4 L414.9,373.4 L420.0,374.2 L426.4,369.4 L431.1,372.6 L435.9,370.2 L442.3,366.2 L445.4,367.0 L450.2,370.2 L453.4,367.8 L461.3,371.0 L470.9,374.2 L478.8,379.8 L483.6,376.6 L488.4,380.6 L493.2,377.4 L496.3,380.6 L505.9,375.0 L515.4,371.8 L520.2,368.6 L528.1,374.2 L534.5,371.0 L547.2,368.6 L553.6,370.2 L558.4,373.4 L569.5,369.4 L579.0,369.4 L591.8,370.2 L604.5,372.6 L610.8,379.0 L617.2,375.0 L625.2,370.2 L639.5,369.4 L645.8,371.8 L649.0,375.0 L652.2,371.0 L658.5,372.6 L663.3,372.6 L666.5,379.0 L670.0,375.8 L674.8,379.8 L678.0,389.3 L682.7,400.4 L687.5,394.9 L692.3,392.5 L698.6,398.0 L705.0,386.9 L711.3,387.7 L716.1,371.0 L720.9,380.6 L725.7,382.1 L730.4,376.6 L733.6,378.2 L736.8,387.7 L743.2,388.5 L749.5,390.9 L755.9,395.7 L763.8,405.2 L771.8,394.1 L781.3,390.1 L790.9,386.1 L802.0,379.8 L809.9,386.1 L817.9,391.7 L822.7,386.9 L830.6,383.7 L840.2,380.6 L848.1,385.3 L856.1,382.9 L864.0,387.7 L872.0,389.3 L876.7,394.9 L883.1,388.5 L889.5,382.1 L894.2,386.9 L900.6,373.4 L908.5,368.6 L916.5,367.8 L920.0,370.2 L926.4,375.8 L931.1,375.8 L937.5,372.6 L943.9,377.4 L947.0,374.2 L951.8,379.8 L956.6,381.3 L961.3,390.1 L966.1,384.5 L974.1,390.1 L980.4,389.3 L983.6,392.5 L990.0,390.9 L994.7,395.7 L997.9,402.0 L1002.7,390.9 L1012.2,386.9 L1017.0,389.3 L1021.8,394.9 L1028.1,394.9 L1034.5,398.8 L1040.9,398.0 L1047.2,402.8 L1050.4,417.1 L1056.8,410.0 L1063.1,410.0 L1068.7,406.8 L1072.7,411.6 L1079.0,413.2 L1083.0,417.9 L1088.6,408.4 L1094.9,403.6 L1099.7,408.4 L1104.5,404.4 L1109.2,407.6 L1114.0,402.8 L1120.4,396.5 L1125.2,394.9 L1131.5,390.1 L1137.9,396.5 L1145.8,393.3 L1152.2,391.7 L1158.5,394.1 L1164.9,390.1 L1170.0,387.5 L1176.4,389.1 L1182.7,386.7 L1189.1,385.1 L1195.4,383.5 L1203.4,383.5 L1209.8,376.3 L1216.1,381.9 L1222.5,376.3 L1228.8,374.7 L1233.6,371.6 L1240.0,364.4 L1246.3,366.8 L1251.1,367.6 L1254.3,375.5 L1259.1,369.2 L1262.2,357.3 L1265.4,350.9 L1267.0,358.0 L1273.4,350.9 L1278.1,354.9 L1282.9,350.9 L1289.3,347.7 L1292.5,339.8 L1297.2,331.8 L1302.0,325.4 L1305.2,334.2 L1306.8,343.7 L1309.9,340.6 L1313.1,347.7 L1319.5,347.7 L1322.7,343.7 L1329.0,346.1 L1335.4,350.9 L1340.2,352.5 L1346.5,346.1 L1351.3,347.7 L1354.5,346.1 L1360.8,347.7 L1367.2,341.3 L1373.6,346.1 L1378.3,356.5 L1383.1,357.3 L1387.9,352.5 L1394.2,354.9 L1399.0,357.3 L1403.8,349.3 L1407.0,339.8 L1411.7,343.7 L1412.5,346.9" fill="none" stroke="#000000" stroke-opacity="0.6" stroke-width="34" stroke-linejoin="round" filter="url(#halo)"/>
</g>
<rect x="171" y="282.0" width="1248" height="2" fill="#7e0d12"/>
<rect x="171" y="292.8" width="14" height="2" fill="#8a1616"/>
<rect x="185" y="313.8" width="29" height="1.5" fill="#6a1010"/>
<rect x="272" y="328.8" width="392" height="2.5" fill="#a01a1a"/>
<rect x="664" y="318.0" width="29" height="2" fill="#9a1818"/>
<rect x="810" y="289.8" width="174" height="2.5" fill="#a31a1c"/>
<rect x="1027" y="321.8" width="392" height="1.5" fill="#7a1014"/>
<rect x="171" y="255.6" width="14" height="1.8" fill="#f0c27c"/>
<rect x="185" y="275.7" width="29" height="2.6" fill="#fbc04a"/>
<rect x="214" y="377.7" width="58" height="2.6" fill="#fbb63c"/>
<rect x="272" y="308.8" width="392" height="2.4" fill="#f5d08c"/>
<rect x="664" y="297.8" width="29" height="2.4" fill="#f8c048"/>
<rect x="810" y="264.8" width="174" height="2.4" fill="#f5c472"/>
<rect x="984" y="281.8" width="43" height="2.4" fill="#ffffff"/>
<rect x="1027" y="295.8" width="392" height="2.4" fill="#f8c04e"/></g>
<line x1="170.5" y1="211.5" x2="170.5" y2="551.5" stroke="#9a9a9a" stroke-width="1"/>
<line x1="1419.5" y1="211.5" x2="1419.5" y2="551.5" stroke="#9a9a9a" stroke-width="1"/>
<path d="M170.0,407.6 L172.4,406.8 L174.8,407.6 L177.2,412.1 L179.5,416.3 L181.9,419.9 L184.3,424.3 L186.7,424.2 L189.1,423.5 L191.5,428.2 L193.9,432.2 L195.8,433.3 L197.8,437.0 L199.8,430.0 L201.8,425.9 L204.2,428.1 L206.6,428.3 L208.7,429.9 L210.8,432.2 L212.9,435.4 L215.3,434.1 L217.7,429.9 L220.9,433.0 L223.0,430.6 L225.1,429.3 L227.3,425.9 L229.2,423.8 L231.2,422.3 L233.2,418.9 L235.2,417.9 L237.6,420.7 L240.0,422.7 L243.2,421.9 L245.5,419.4 L247.9,414.7 L250.0,414.3 L252.2,414.4 L254.3,413.2 L256.7,412.5 L259.1,410.8 L261.2,407.3 L263.3,407.3 L265.4,404.4 L267.8,407.5 L270.2,410.0 L272.2,408.8 L274.2,407.4 L276.2,409.3 L278.1,407.6 L280.3,407.0 L282.4,407.2 L284.5,406.0 L286.6,408.7 L288.7,409.8 L290.9,410.8 L293.0,409.9 L295.1,406.2 L297.2,404.4 L299.2,404.1 L301.2,401.9 L303.2,402.1 L305.2,399.6 L307.2,399.4 L309.2,395.6 L311.1,394.4 L313.1,394.1 L315.5,394.0 L317.9,395.7 L320.3,394.7 L322.7,390.9 L324.8,389.6 L326.9,389.2 L329.0,387.7 L331.2,386.3 L333.3,386.1 L335.4,385.3 L337.5,385.5 L339.6,385.9 L341.8,386.9 L344.9,384.5 L348.1,394.9 L350.5,385.2 L352.9,375.0 L355.3,367.3 L357.7,359.1 L360.0,365.1 L362.4,368.6 L364.8,367.2 L367.2,364.7 L369.6,369.5 L372.0,371.8 L374.4,371.7 L376.7,369.4 L378.9,368.8 L381.0,365.7 L383.1,363.1 L385.2,363.9 L387.3,367.9 L389.5,368.6 L391.9,372.8 L394.2,374.2 L396.6,375.8 L399.0,375.0 L400.9,374.1 L402.8,373.4 L404.7,370.8 L406.6,371.5 L408.5,369.4 L410.7,371.0 L412.8,371.4 L414.9,373.4 L417.5,372.5 L420.0,374.2 L422.1,373.7 L424.2,372.5 L426.4,369.4 L428.7,369.8 L431.1,372.6 L433.5,372.3 L435.9,370.2 L438.0,368.6 L440.1,366.5 L442.3,366.2 L445.4,367.0 L447.8,368.0 L450.2,370.2 L453.4,367.8 L455.4,369.4 L457.4,370.5 L459.4,368.8 L461.3,371.0 L463.3,372.0 L465.2,370.9 L467.1,373.6 L469.0,373.0 L470.9,374.2 L472.9,376.7 L474.9,378.4 L476.9,378.4 L478.8,379.8 L481.2,379.7 L483.6,376.6 L486.0,378.0 L488.4,380.6 L490.8,377.7 L493.2,377.4 L496.3,380.6 L498.2,379.7 L500.2,376.9 L502.1,376.3 L504.0,375.8 L505.9,375.0 L507.8,374.7 L509.7,372.7 L511.6,371.7 L513.5,373.5 L515.4,371.8 L517.8,369.7 L520.2,368.6 L522.2,371.4 L524.2,372.6 L526.2,372.4 L528.1,374.2 L530.3,373.0 L532.4,372.1 L534.5,371.0 L536.3,371.1 L538.1,370.6 L540.0,370.2 L541.8,370.0 L543.6,370.6 L545.4,369.0 L547.2,368.6 L549.3,368.9 L551.5,370.3 L553.6,370.2 L556.0,371.0 L558.4,373.4 L560.2,372.1 L562.1,373.5 L563.9,371.5 L565.8,370.9 L567.6,368.6 L569.5,369.4 L571.4,369.2 L573.3,369.7 L575.2,368.0 L577.1,369.8 L579.0,369.4 L580.9,369.9 L582.7,368.3 L584.5,370.1 L586.3,369.8 L588.1,370.5 L589.9,369.7 L591.8,370.2 L593.6,371.2 L595.4,371.6 L597.2,369.8 L599.0,370.3 L600.8,372.4 L602.7,373.7 L604.5,372.6 L606.6,374.0 L608.7,376.7 L610.8,379.0 L613.0,377.9 L615.1,375.8 L617.2,375.0 L619.2,373.4 L621.2,372.0 L623.2,371.0 L625.2,370.2 L627.2,370.4 L629.2,369.4 L631.3,369.5 L633.3,370.6 L635.4,368.2 L637.4,369.7 L639.5,369.4 L641.6,370.9 L643.7,370.4 L645.8,371.8 L649.0,375.0 L652.2,371.0 L654.3,370.7 L656.4,373.0 L658.5,372.6 L660.9,371.8 L663.3,372.6 L666.5,379.0 L670.0,375.8 L672.4,376.8 L674.8,379.8 L678.0,389.3 L680.3,394.7 L682.7,400.4 L685.1,398.2 L687.5,394.9 L689.9,392.5 L692.3,392.5 L694.4,393.8 L696.5,395.7 L698.6,398.0 L700.7,395.3 L702.9,390.4 L705.0,386.9 L707.1,388.2 L709.2,386.5 L711.3,387.7 L713.7,378.9 L716.1,371.0 L718.5,376.2 L720.9,380.6 L723.3,382.5 L725.7,382.1 L728.0,379.2 L730.4,376.6 L733.6,378.2 L736.8,387.7 L738.9,387.2 L741.0,387.1 L743.2,388.5 L745.3,389.4 L747.4,389.2 L749.5,390.9 L751.6,393.4 L753.8,395.1 L755.9,395.7 L757.9,397.1 L759.9,399.8 L761.8,403.7 L763.8,405.2 L765.8,402.8 L767.8,400.6 L769.8,396.4 L771.8,394.1 L773.7,392.2 L775.6,391.9 L777.5,392.6 L779.4,390.2 L781.3,390.1 L783.2,388.8 L785.1,388.3 L787.0,387.5 L789.0,386.6 L790.9,386.1 L792.7,386.3 L794.6,383.0 L796.4,381.5 L798.3,383.2 L800.1,382.0 L802.0,379.8 L804.0,382.8 L806.0,382.7 L808.0,385.9 L809.9,386.1 L811.9,388.8 L813.9,388.1 L815.9,391.0 L817.9,391.7 L820.3,390.3 L822.7,386.9 L824.7,386.6 L826.6,385.4 L828.6,383.9 L830.6,383.7 L832.5,382.6 L834.4,381.6 L836.3,380.5 L838.3,381.5 L840.2,380.6 L842.2,381.1 L844.1,383.9 L846.1,382.8 L848.1,385.3 L850.1,385.9 L852.1,384.7 L854.1,384.8 L856.1,382.9 L858.1,385.3 L860.0,386.5 L862.0,386.7 L864.0,387.7 L866.0,386.6 L868.0,389.2 L870.0,387.9 L872.0,389.3 L874.4,391.5 L876.7,394.9 L878.9,393.2 L881.0,390.7 L883.1,388.5 L885.2,386.1 L887.3,385.6 L889.5,382.1 L891.9,384.9 L894.2,386.9 L896.4,381.9 L898.5,377.2 L900.6,373.4 L902.6,373.3 L904.6,370.9 L906.6,370.7 L908.5,368.6 L910.5,368.0 L912.5,367.3 L914.5,368.1 L916.5,367.8 L920.0,370.2 L922.1,373.0 L924.2,372.9 L926.4,375.8 L928.7,376.7 L931.1,375.8 L933.3,376.0 L935.4,374.6 L937.5,372.6 L939.6,375.2 L941.7,374.3 L943.9,377.4 L947.0,374.2 L949.4,377.4 L951.8,379.8 L954.2,381.6 L956.6,381.3 L959.0,384.4 L961.3,390.1 L963.7,386.6 L966.1,384.5 L968.1,385.2 L970.1,387.4 L972.1,388.5 L974.1,390.1 L976.2,389.7 L978.3,390.4 L980.4,389.3 L983.6,392.5 L985.7,390.5 L987.9,390.1 L990.0,390.9 L992.4,392.2 L994.7,395.7 L997.9,402.0 L1000.3,395.3 L1002.7,390.9 L1004.6,388.8 L1006.5,390.7 L1008.4,389.6 L1010.3,386.5 L1012.2,386.9 L1014.6,388.1 L1017.0,389.3 L1019.4,391.5 L1021.8,394.9 L1023.9,394.3 L1026.0,394.4 L1028.1,394.9 L1030.3,396.6 L1032.4,397.8 L1034.5,398.8 L1036.6,398.2 L1038.7,397.4 L1040.9,398.0 L1043.0,399.1 L1045.1,400.1 L1047.2,402.8 L1050.4,417.1 L1052.5,414.9 L1054.6,413.0 L1056.8,410.0 L1058.9,409.6 L1061.0,408.7 L1063.1,410.0 L1065.0,408.0 L1066.8,407.5 L1068.7,406.8 L1070.7,409.5 L1072.7,411.6 L1074.8,412.9 L1076.9,412.3 L1079.0,413.2 L1081.0,416.4 L1083.0,417.9 L1084.9,415.1 L1086.7,411.4 L1088.6,408.4 L1090.7,406.4 L1092.8,405.2 L1094.9,403.6 L1097.3,406.6 L1099.7,408.4 L1102.1,406.2 L1104.5,404.4 L1106.9,406.6 L1109.2,407.6 L1111.6,405.1 L1114.0,402.8 L1116.1,399.9 L1118.3,398.7 L1120.4,396.5 L1122.8,396.2 L1125.2,394.9 L1127.3,392.0 L1129.4,391.5 L1131.5,390.1 L1133.6,392.0 L1135.8,395.5 L1137.9,396.5 L1139.9,397.0 L1141.9,394.5 L1143.8,395.3 L1145.8,393.3 L1147.9,393.6 L1150.1,391.5 L1152.2,391.7 L1154.3,392.4 L1156.4,392.1 L1158.5,394.1 L1160.7,393.7 L1162.8,391.9 L1164.9,390.1 L1167.5,389.9 L1170.0,387.5 L1172.1,388.9 L1174.2,389.0 L1176.4,389.1 L1178.5,389.0 L1180.6,387.7 L1182.7,386.7 L1184.8,385.0 L1187.0,385.9 L1189.1,385.1 L1191.2,383.1 L1193.3,383.0 L1195.4,383.5 L1197.4,384.3 L1199.4,382.1 L1201.4,382.3 L1203.4,383.5 L1205.5,379.9 L1207.6,379.9 L1209.8,376.3 L1211.9,377.2 L1214.0,378.6 L1216.1,381.9 L1218.2,381.1 L1220.4,377.1 L1222.5,376.3 L1224.6,376.8 L1226.7,375.8 L1228.8,374.7 L1231.2,374.2 L1233.6,371.6 L1235.7,370.5 L1237.9,367.0 L1240.0,364.4 L1242.1,366.1 L1244.2,364.6 L1246.3,366.8 L1248.7,368.0 L1251.1,367.6 L1254.3,375.5 L1256.7,372.4 L1259.1,369.2 L1262.2,357.3 L1265.4,350.9 L1267.0,358.0 L1269.1,356.3 L1271.3,352.1 L1273.4,350.9 L1275.8,353.6 L1278.1,354.9 L1280.5,354.2 L1282.9,350.9 L1285.0,348.5 L1287.2,348.2 L1289.3,347.7 L1292.5,339.8 L1294.8,336.0 L1297.2,331.8 L1299.6,329.6 L1302.0,325.4 L1305.2,334.2 L1306.8,343.7 L1309.9,340.6 L1313.1,347.7 L1315.3,346.9 L1317.4,346.7 L1319.5,347.7 L1322.7,343.7 L1324.8,343.8 L1326.9,345.7 L1329.0,346.1 L1331.2,348.5 L1333.3,349.0 L1335.4,350.9 L1337.8,351.3 L1340.2,352.5 L1342.3,350.1 L1344.4,347.8 L1346.5,346.1 L1348.9,346.7 L1351.3,347.7 L1354.5,346.1 L1356.6,345.4 L1358.7,347.2 L1360.8,347.7 L1363.0,347.0 L1365.1,343.2 L1367.2,341.3 L1369.3,343.7 L1371.4,343.5 L1373.6,346.1 L1375.9,351.9 L1378.3,356.5 L1380.7,357.6 L1383.1,357.3 L1385.5,355.4 L1387.9,352.5 L1390.0,353.3 L1392.1,354.0 L1394.2,354.9 L1396.6,356.5 L1399.0,357.3 L1401.4,354.5 L1403.8,349.3 L1407.0,339.8 L1409.3,340.7 L1411.7,343.7 L1412.5,346.9" fill="none" stroke="#3588cc" stroke-width="2.8" stroke-linejoin="round" stroke-linecap="round" clip-path="url(#hclip)"/>
<rect x="136" y="222" width="24.5" height="319.5" fill="url(#cb)"/>
<text x="110.5" y="229.5" font-size="13.6" fill="#eeeeee" text-anchor="end">80.000 M</text>
<text x="110.5" y="308.5" font-size="13.6" fill="#eeeeee" text-anchor="end">60.000 M</text>
<text x="110.5" y="387.1" font-size="13.6" fill="#eeeeee" text-anchor="end">40.000 M</text>
<text x="110.5" y="466.1" font-size="13.6" fill="#eeeeee" text-anchor="end">20.000 M</text>
<text transform="translate(32,494.5) rotate(-90)" font-size="13.3" fill="#eeeeee" text-anchor="middle">Volume (USDT)</text>
<line x1="1419.5" y1="549.2" x2="1423.5" y2="549.2" stroke="#8a8a8a" stroke-width="1"/>
<line x1="1419.5" y1="533.5" x2="1423.5" y2="533.5" stroke="#8a8a8a" stroke-width="1"/>
<line x1="1419.5" y1="517.8" x2="1425.5" y2="517.8" stroke="#8a8a8a" stroke-width="1"/>
<line x1="1419.5" y1="502.1" x2="1423.5" y2="502.1" stroke="#8a8a8a" stroke-width="1"/>
<line x1="1419.5" y1="486.4" x2="1423.5" y2="486.4" stroke="#8a8a8a" stroke-width="1"/>
<line x1="1419.5" y1="470.7" x2="1423.5" y2="470.7" stroke="#8a8a8a" stroke-width="1"/>
<line x1="1419.5" y1="455.0" x2="1423.5" y2="455.0" stroke="#8a8a8a" stroke-width="1"/>
<line x1="1419.5" y1="439.3" x2="1425.5" y2="439.3" stroke="#8a8a8a" stroke-width="1"/>
<line x1="1419.5" y1="423.6" x2="1423.5" y2="423.6" stroke="#8a8a8a" stroke-width="1"/>
<line x1="1419.5" y1="407.9" x2="1423.5" y2="407.9" stroke="#8a8a8a" stroke-width="1"/>
<line x1="1419.5" y1="392.2" x2="1423.5" y2="392.2" stroke="#8a8a8a" stroke-width="1"/>
<line x1="1419.5" y1="376.5" x2="1423.5" y2="376.5" stroke="#8a8a8a" stroke-width="1"/>
<line x1="1419.5" y1="360.8" x2="1425.5" y2="360.8" stroke="#8a8a8a" stroke-width="1"/>
<line x1="1419.5" y1="345.1" x2="1423.5" y2="345.1" stroke="#8a8a8a" stroke-width="1"/>
<line x1="1419.5" y1="329.4" x2="1423.5" y2="329.4" stroke="#8a8a8a" stroke-width="1"/>
<line x1="1419.5" y1="313.7" x2="1423.5" y2="313.7" stroke="#8a8a8a" stroke-width="1"/>
<line x1="1419.5" y1="298.0" x2="1423.5" y2="298.0" stroke="#8a8a8a" stroke-width="1"/>
<line x1="1419.5" y1="282.3" x2="1425.5" y2="282.3" stroke="#8a8a8a" stroke-width="1"/>
<line x1="1419.5" y1="266.6" x2="1423.5" y2="266.6" stroke="#8a8a8a" stroke-width="1"/>
<line x1="1419.5" y1="250.9" x2="1423.5" y2="250.9" stroke="#8a8a8a" stroke-width="1"/>
<line x1="1419.5" y1="235.2" x2="1423.5" y2="235.2" stroke="#8a8a8a" stroke-width="1"/>
<line x1="1419.5" y1="219.5" x2="1423.5" y2="219.5" stroke="#8a8a8a" stroke-width="1"/>
<text x="1441.5" y="286.0" font-size="11.3" fill="#eeeeee">90.00 k</text>
<text x="1441.5" y="364.5" font-size="11.3" fill="#eeeeee">85.00 k</text>
<text x="1441.5" y="443.3" font-size="11.3" fill="#eeeeee">80.00 k</text>
<text x="1441.5" y="521.7" font-size="11.3" fill="#eeeeee">75.00 k</text>
<text transform="translate(1497,381) rotate(90)" font-size="15.5" fill="#eeeeee" text-anchor="middle">Price (USDT)</text>
<rect x="170.5" y="561.5" width="1249" height="160.5" fill="#191919" stroke="#6a6a6a" stroke-width="1"/>
<line x1="170.5" y1="561" x2="170.5" y2="722.5" stroke="#9a9a9a" stroke-width="1"/>
<line x1="1419.5" y1="561" x2="1419.5" y2="722.5" stroke="#9a9a9a" stroke-width="1"/>
<line x1="171" y1="715.4" x2="1419" y2="715.4" stroke="#3c3c3c" stroke-width="1"/>
<line x1="171" y1="686.1" x2="1419" y2="686.1" stroke="#3c3c3c" stroke-width="1"/>
<line x1="171" y1="656.7" x2="1419" y2="656.7" stroke="#3c3c3c" stroke-width="1"/>
<line x1="171" y1="627.4" x2="1419" y2="627.4" stroke="#3c3c3c" stroke-width="1"/>
<line x1="171" y1="598.0" x2="1419" y2="598.0" stroke="#3c3c3c" stroke-width="1"/>
<line x1="171" y1="568.7" x2="1419" y2="568.7" stroke="#3c3c3c" stroke-width="1"/>
<line x1="243.5" y1="562" x2="243.5" y2="722" stroke="#3c3c3c" stroke-width="1"/>
<line x1="243.5" y1="722" x2="243.5" y2="728" stroke="#888888" stroke-width="1"/>
<text x="243.5" y="746.2" font-size="11.5" fill="#eeeeee" text-anchor="middle">3/14</text>
<line x1="420" y1="562" x2="420" y2="722" stroke="#3c3c3c" stroke-width="1"/>
<line x1="420" y1="722" x2="420" y2="728" stroke="#888888" stroke-width="1"/>
<text x="420" y="746.2" font-size="11.5" fill="#eeeeee" text-anchor="middle">3/15</text>
<line x1="596.5" y1="562" x2="596.5" y2="722" stroke="#3c3c3c" stroke-width="1"/>
<line x1="596.5" y1="722" x2="596.5" y2="728" stroke="#888888" stroke-width="1"/>
<text x="596.5" y="746.2" font-size="11.5" fill="#eeeeee" text-anchor="middle">3/16</text>
<line x1="772.5" y1="562" x2="772.5" y2="722" stroke="#3c3c3c" stroke-width="1"/>
<line x1="772.5" y1="722" x2="772.5" y2="728" stroke="#888888" stroke-width="1"/>
<text x="772.5" y="746.2" font-size="11.5" fill="#eeeeee" text-anchor="middle">3/17</text>
<line x1="949.4" y1="562" x2="949.4" y2="722" stroke="#3c3c3c" stroke-width="1"/>
<line x1="949.4" y1="722" x2="949.4" y2="728" stroke="#888888" stroke-width="1"/>
<text x="949.4" y="746.2" font-size="11.5" fill="#eeeeee" text-anchor="middle">3/18</text>
<line x1="1125.5" y1="562" x2="1125.5" y2="722" stroke="#3c3c3c" stroke-width="1"/>
<line x1="1125.5" y1="722" x2="1125.5" y2="728" stroke="#888888" stroke-width="1"/>
<text x="1125.5" y="746.2" font-size="11.5" fill="#eeeeee" text-anchor="middle">3/19</text>
<line x1="1301.5" y1="562" x2="1301.5" y2="722" stroke="#3c3c3c" stroke-width="1"/>
<line x1="1301.5" y1="722" x2="1301.5" y2="728" stroke="#888888" stroke-width="1"/>
<text x="1301.5" y="746.2" font-size="11.5" fill="#eeeeee" text-anchor="middle">3/20</text>
<path d="M160.8,715 L167.5,701.7 L167.5,688 L183.5,688 L183.5,701.7 L190.2,715 M164.5,715 L170.5,701.7 L170.5,692 L180.5,692 L180.5,701.7 L186.5,715" fill="none" stroke="#505050" stroke-width="1.4" clip-path="url(#cclip)"/>
<path d="M500.8,715 L507.5,701.7 L507.5,688 L523.5,688 L523.5,701.7 L530.2,715 M504.5,715 L510.5,701.7 L510.5,692 L520.5,692 L520.5,701.7 L526.5,715" fill="none" stroke="#505050" stroke-width="1.4" clip-path="url(#cclip)"/>
<path d="M839.8,715 L846.5,701.7 L846.5,688 L862.5,688 L862.5,701.7 L869.2,715 M843.5,715 L849.5,701.7 L849.5,692 L859.5,692 L859.5,701.7 L865.5,715" fill="none" stroke="#505050" stroke-width="1.4" clip-path="url(#cclip)"/>
<path d="M1176.3,715 L1183.0,701.7 L1183.0,688 L1199.0,688 L1199.0,701.7 L1205.7,715 M1180.0,715 L1186.0,701.7 L1186.0,692 L1196.0,692 L1196.0,701.7 L1202.0,715" fill="none" stroke="#505050" stroke-width="1.4" clip-path="url(#cclip)"/>
<path d="M170.0,602.1 L172.7,601.7 L175.4,603.0 L178.1,605.8 L180.8,610.2 L183.2,612.5 L185.5,613.7 L187.9,616.5 L190.3,618.4 L192.7,621.8 L195.1,624.6 L198.7,627.3 L201.1,626.8 L203.5,626.0 L205.9,626.4 L208.3,626.1 L210.7,627.1 L213.0,626.4 L215.4,623.8 L217.8,622.1 L220.2,621.0 L222.6,618.1 L225.0,616.8 L227.4,615.6 L229.8,613.8 L232.2,614.9 L234.6,612.9 L237.0,612.5 L239.3,614.0 L241.7,612.9 L244.1,611.8 L246.5,613.2 L248.9,612.0 L251.3,612.0 L253.7,612.4 L256.1,612.0 L258.5,611.5 L260.9,609.7 L263.3,609.3 L266.8,611.1 L270.4,620.1 L272.8,619.8 L275.2,621.1 L277.6,621.0 L279.8,621.1 L282.1,621.7 L284.3,624.3 L286.6,624.6 L288.8,625.5 L291.1,625.4 L293.3,626.6 L295.5,627.3 L297.9,627.0 L300.3,624.4 L302.7,623.7 L305.0,621.7 L307.2,621.2 L309.4,619.6 L311.7,619.2 L314.1,619.5 L316.5,619.3 L318.9,621.0 L322.4,615.6 L324.8,615.6 L327.2,615.1 L329.6,613.8 L332.0,612.9 L334.4,612.3 L336.8,612.0 L338.8,609.9 L340.8,609.9 L342.8,608.1 L344.9,605.7 L347.1,607.9 L349.3,609.3 L352.9,603.0 L355.6,576.1 L357.9,575.9 L360.1,577.0 L362.5,576.0 L364.9,577.0 L367.3,576.1 L370.0,574.6 L372.7,574.3 L375.0,574.8 L377.4,574.2 L379.8,574.3 L382.2,573.9 L384.6,574.9 L387.0,576.1 L389.7,577.9 L392.4,577.9 L394.6,577.3 L396.9,577.9 L399.1,577.8 L401.3,577.0 L404.0,575.0 L406.7,573.5 L409.1,573.1 L411.5,573.6 L413.9,572.6 L415.9,573.9 L418.0,574.4 L420.0,575.2 L422.2,574.8 L424.3,574.1 L426.5,573.5 L428.6,573.5 L430.8,572.6 L432.9,571.4 L434.9,572.2 L437.0,570.3 L439.1,569.6 L441.2,570.6 L443.3,569.0 L445.4,568.2 L447.5,569.4 L449.6,570.0 L451.7,570.0 L453.8,571.2 L455.9,570.8 L458.0,571.7 L460.2,571.8 L462.3,571.3 L464.5,574.0 L466.6,573.5 L469.3,575.4 L472.0,577.9 L475.6,585.1 L479.2,591.4 L481.9,591.5 L484.6,592.3 L488.1,596.8 L490.5,595.8 L492.9,595.5 L495.3,595.9 L497.7,594.1 L500.1,593.3 L502.5,593.2 L504.9,593.0 L507.3,591.5 L509.7,591.4 L512.1,591.1 L514.5,591.1 L516.8,590.5 L519.5,588.6 L522.2,588.7 L524.9,593.7 L527.6,597.7 L529.8,596.8 L532.1,597.9 L534.3,597.8 L536.6,596.8 L538.8,596.0 L541.1,595.0 L543.3,594.8 L545.5,594.1 L547.9,595.0 L550.3,595.1 L552.7,594.1 L555.0,596.3 L557.2,597.4 L559.4,599.2 L561.7,601.2 L563.8,601.7 L566.0,600.9 L568.1,601.9 L570.3,600.9 L572.4,601.2 L574.5,601.6 L576.6,601.6 L578.7,601.8 L580.8,602.6 L582.9,602.9 L585.0,602.1 L587.0,602.8 L589.1,602.5 L591.1,601.9 L593.2,601.9 L595.2,602.1 L597.3,602.9 L599.3,602.1 L601.7,603.6 L604.1,603.0 L606.5,604.8 L609.2,605.6 L611.9,607.5 L614.1,606.1 L616.4,606.2 L618.6,606.9 L620.9,605.7 L622.9,605.5 L625.0,603.7 L627.0,604.7 L629.1,603.9 L631.1,603.1 L633.2,601.6 L635.2,602.1 L637.4,601.4 L639.5,601.9 L641.7,604.0 L643.8,603.4 L646.0,603.9 L648.1,602.7 L650.2,604.0 L652.2,603.0 L654.3,602.4 L656.4,602.2 L658.5,602.1 L660.4,602.1 L662.3,602.3 L664.3,604.6 L666.2,605.4 L668.1,604.8 L670.0,605.7 L672.7,607.2 L675.4,608.4 L677.8,613.4 L680.2,615.7 L682.6,621.0 L684.7,621.2 L686.9,618.3 L689.0,618.0 L691.2,616.4 L693.3,616.5 L696.0,617.6 L698.7,620.1 L700.8,618.9 L702.9,618.6 L705.0,618.6 L707.1,618.6 L709.2,617.8 L711.2,617.4 L714.8,606.6 L717.1,607.6 L719.3,608.5 L721.6,607.4 L723.8,608.4 L726.2,608.1 L728.6,608.6 L731.0,608.4 L733.4,609.6 L735.8,611.0 L738.1,613.8 L740.3,614.9 L742.5,614.5 L744.6,614.6 L746.8,615.6 L748.9,615.6 L751.1,615.8 L753.2,616.7 L755.4,617.0 L757.5,618.3 L759.7,619.2 L761.8,618.8 L764.0,619.3 L766.1,620.0 L768.3,619.8 L770.4,619.2 L772.6,619.2 L774.7,618.7 L776.9,618.9 L779.0,617.0 L781.2,617.4 L783.2,618.0 L785.3,615.9 L787.3,617.1 L789.4,615.8 L791.4,615.9 L793.5,616.1 L795.5,614.7 L797.9,613.7 L800.3,614.3 L802.7,614.7 L804.9,614.9 L807.0,616.4 L809.2,617.4 L811.3,619.4 L813.5,620.1 L815.6,621.9 L817.8,621.7 L819.9,623.1 L822.1,623.5 L824.2,625.5 L826.4,624.2 L828.5,624.0 L830.7,623.4 L832.8,624.8 L835.0,623.7 L837.0,623.1 L839.1,623.8 L841.1,623.9 L843.2,622.6 L845.2,622.9 L847.3,623.2 L849.3,622.8 L851.5,622.5 L853.6,622.7 L855.8,621.3 L857.9,622.8 L860.1,621.9 L862.3,623.1 L864.4,623.3 L866.6,623.1 L868.7,622.8 L870.9,622.8 L873.0,621.6 L875.2,620.8 L877.3,621.0 L879.5,620.0 L881.6,620.1 L883.8,620.2 L885.9,620.7 L888.1,619.0 L890.2,619.6 L892.4,619.2 L894.6,618.1 L896.9,619.3 L899.1,618.2 L901.3,617.4 L903.6,619.2 L905.8,620.6 L908.1,621.5 L910.3,623.7 L912.3,625.4 L914.2,625.1 L916.1,626.8 L918.1,627.1 L920.0,627.3 L922.4,628.4 L924.8,627.5 L927.2,628.1 L929.4,628.7 L931.7,628.8 L933.9,627.9 L936.1,629.0 L938.3,630.2 L940.4,629.3 L942.6,629.9 L944.7,629.4 L946.9,630.8 L949.1,631.3 L951.4,631.3 L953.6,632.4 L955.9,633.5 L958.6,636.0 L961.2,637.1 L963.4,636.4 L965.6,637.6 L967.7,636.7 L969.9,637.4 L972.0,637.1 L974.3,637.8 L976.5,636.6 L978.7,636.3 L981.0,637.1 L983.4,640.5 L985.8,641.5 L988.1,644.3 L990.4,647.6 L992.6,649.1 L994.9,653.4 L997.1,655.1 L999.4,655.5 L1001.6,653.5 L1003.8,654.5 L1006.1,653.3 L1008.2,653.5 L1010.4,655.8 L1012.5,654.9 L1014.7,656.5 L1016.8,657.7 L1019.0,657.0 L1021.1,659.2 L1023.3,658.4 L1025.5,659.3 L1027.6,659.5 L1029.7,660.3 L1031.7,659.3 L1033.8,660.3 L1035.8,660.4 L1037.9,660.3 L1039.9,659.8 L1042.0,660.4 L1044.2,661.9 L1046.4,664.1 L1048.7,666.5 L1050.9,667.6 L1053.1,665.3 L1055.2,665.2 L1057.4,662.4 L1059.5,661.3 L1061.7,660.4 L1064.1,659.2 L1066.5,659.0 L1068.9,659.5 L1071.1,662.3 L1073.3,665.5 L1075.6,667.7 L1077.8,669.4 L1080.0,669.7 L1082.1,670.8 L1084.3,668.8 L1086.4,669.7 L1088.6,670.3 L1090.7,669.8 L1092.9,671.5 L1095.0,672.8 L1097.2,672.1 L1099.3,673.0 L1101.5,673.2 L1103.6,672.9 L1105.8,673.2 L1107.9,672.8 L1110.1,673.9 L1112.2,674.0 L1114.3,674.2 L1116.4,674.2 L1118.5,674.0 L1120.6,673.6 L1122.7,673.0 L1124.9,671.0 L1127.1,669.7 L1129.4,667.3 L1131.6,664.9 L1134.0,667.7 L1136.4,669.8 L1138.8,672.1 L1140.9,673.9 L1143.0,674.2 L1145.1,675.6 L1147.2,675.8 L1149.3,675.9 L1151.3,677.5 L1153.5,678.4 L1155.7,680.1 L1157.8,679.2 L1160.0,682.1 L1162.1,682.0 L1164.1,682.2 L1166.1,681.8 L1168.0,681.7 L1170.0,682.0 L1172.2,682.8 L1174.3,684.1 L1176.5,684.2 L1178.6,684.0 L1180.8,685.5 L1183.2,686.5 L1185.5,687.1 L1187.9,689.1 L1190.3,693.1 L1192.7,697.0 L1195.1,699.9 L1197.5,700.2 L1199.9,702.1 L1202.3,701.7 L1204.5,700.8 L1206.8,698.8 L1209.0,696.8 L1211.2,694.5 L1213.6,695.1 L1216.0,696.5 L1218.4,699.0 L1221.1,696.8 L1223.8,696.3 L1226.2,696.7 L1228.6,699.1 L1231.0,699.9 L1233.4,699.5 L1235.8,698.6 L1238.1,696.3 L1241.7,693.6 L1244.1,695.4 L1246.5,697.6 L1248.9,699.0 L1251.3,698.7 L1253.7,699.4 L1256.1,699.9 L1258.5,699.4 L1260.9,699.1 L1263.3,697.2 L1265.6,697.4 L1268.0,697.0 L1270.4,696.3 L1272.8,701.0 L1275.2,703.9 L1277.6,708.9 L1279.8,708.3 L1282.1,708.1 L1284.3,709.9 L1286.6,708.9 L1289.0,704.2 L1291.4,699.7 L1293.7,696.3 L1295.8,693.2 L1297.8,691.7 L1299.8,689.9 L1301.8,688.2 L1303.9,690.1 L1306.0,692.5 L1308.1,695.4 L1310.3,695.4 L1312.6,696.3 L1314.8,697.3 L1317.1,699.0 L1319.2,699.0 L1321.4,699.3 L1323.5,699.6 L1325.7,699.2 L1327.8,699.0 L1330.2,698.5 L1332.6,699.1 L1335.0,700.8 L1337.7,705.9 L1340.4,710.6 L1342.6,709.9 L1344.9,710.8 L1347.1,709.6 L1349.3,708.9 L1351.5,709.2 L1353.6,707.1 L1355.8,706.4 L1357.9,706.0 L1360.1,706.2 L1362.5,706.0 L1364.9,703.9 L1367.3,702.6 L1369.7,704.5 L1372.1,706.5 L1374.4,708.0 L1376.6,707.8 L1378.8,709.3 L1380.9,710.2 L1383.1,709.9 L1385.2,711.5 L1387.4,711.0 L1389.5,710.9 L1391.7,711.8 L1393.8,711.2 L1396.0,712.4 L1398.4,711.4 L1400.8,713.1 L1403.1,712.4 L1406.7,707.1 L1409.4,708.6 L1412.1,708.9" fill="none" stroke="#3386c8" stroke-width="3.1" stroke-linejoin="round" clip-path="url(#cclip)"/>
<path d="M170.0,647.0 L172.4,645.8 L174.8,642.9 L177.2,642.5 L179.3,641.1 L181.5,640.1 L183.6,640.3 L185.8,639.3 L187.9,638.0 L190.2,641.1 L192.4,641.6 L194.7,644.6 L196.9,647.0 L199.1,644.4 L201.4,643.2 L203.6,642.3 L205.9,640.7 L208.1,639.9 L210.4,640.5 L212.6,641.7 L214.8,641.6 L217.1,642.4 L219.3,642.3 L221.6,643.8 L223.8,644.3 L226.0,644.7 L228.3,642.8 L230.5,644.3 L232.8,643.4 L235.0,644.5 L237.3,644.4 L239.5,644.7 L241.7,646.1 L244.4,644.4 L247.1,640.7 L249.5,640.9 L251.9,641.0 L254.3,642.5 L256.5,640.7 L258.8,641.5 L261.0,640.0 L263.3,638.9 L265.5,639.6 L267.7,639.4 L270.0,639.0 L272.2,638.9 L274.3,639.8 L276.4,638.3 L278.5,638.6 L280.6,639.0 L282.7,638.4 L284.8,638.0 L286.9,639.7 L289.1,640.0 L291.2,641.2 L293.4,640.6 L295.5,642.5 L297.8,640.6 L300.0,639.3 L302.3,637.5 L304.5,637.1 L306.9,635.9 L309.3,635.0 L311.7,635.3 L314.4,637.5 L317.1,640.7 L319.3,639.7 L321.5,637.7 L323.8,636.4 L326.0,635.3 L328.3,635.4 L330.5,636.2 L332.8,638.3 L335.0,638.0 L337.2,639.2 L339.5,640.0 L341.7,640.0 L344.0,641.6 L346.6,645.2 L349.3,647.9 L351.7,645.9 L354.1,645.2 L356.5,644.3 L358.8,647.2 L361.0,648.2 L363.2,649.8 L365.5,651.5 L367.7,652.5 L370.0,653.6 L372.2,654.1 L374.4,654.2 L376.6,653.4 L378.8,652.8 L380.9,653.2 L383.1,652.9 L385.2,653.3 L387.4,653.0 L389.5,654.9 L391.7,655.2 L393.8,654.3 L396.0,655.1 L398.1,655.9 L400.3,655.9 L402.4,657.6 L404.6,657.1 L406.7,657.7 L408.6,657.9 L410.5,658.5 L412.4,659.8 L414.3,659.8 L416.2,661.1 L418.1,662.5 L420.0,662.2 L422.2,662.4 L424.3,662.3 L426.5,664.4 L428.6,663.7 L430.8,664.0 L433.0,663.1 L435.2,663.0 L437.5,663.2 L439.7,664.0 L442.1,665.2 L444.5,666.5 L446.9,666.7 L449.3,665.0 L451.7,662.8 L454.1,662.2 L456.2,661.6 L458.4,662.6 L460.5,661.2 L462.7,661.8 L464.8,660.4 L467.1,660.8 L469.3,658.5 L471.6,659.6 L473.8,658.6 L476.0,658.6 L478.3,657.8 L480.5,656.8 L482.8,656.8 L485.0,656.5 L487.3,654.6 L489.5,654.7 L491.7,654.2 L493.9,653.2 L496.0,653.4 L498.2,652.3 L500.3,650.0 L502.5,649.7 L504.6,649.4 L506.7,648.4 L508.8,649.7 L510.9,649.3 L513.0,647.7 L515.1,647.9 L517.1,648.2 L519.2,648.1 L521.3,647.1 L523.4,648.5 L525.5,648.0 L527.6,647.9 L529.8,649.0 L531.9,649.0 L534.1,648.4 L536.2,649.6 L538.4,650.6 L540.5,650.4 L542.7,653.3 L544.8,654.1 L547.0,654.9 L549.1,655.1 L551.3,655.7 L553.4,656.2 L555.6,659.1 L557.7,660.3 L559.9,660.4 L562.1,660.4 L564.4,662.2 L566.6,662.2 L568.9,664.0 L571.2,665.8 L573.6,667.0 L576.0,667.6 L578.2,667.1 L580.3,668.3 L582.5,668.8 L584.6,668.5 L586.8,669.4 L588.9,670.1 L591.0,668.9 L593.1,668.3 L595.2,668.9 L597.2,669.2 L599.3,668.5 L601.7,668.4 L604.1,669.3 L606.5,670.3 L609.2,673.6 L611.9,674.8 L614.1,674.0 L616.4,672.4 L618.6,671.5 L620.9,670.3 L623.0,669.1 L625.2,669.0 L627.3,668.9 L629.5,669.1 L631.6,668.5 L633.7,668.0 L635.7,668.1 L637.8,667.9 L639.8,669.3 L641.9,668.5 L643.9,670.2 L646.0,669.4 L649.6,671.2 L653.1,666.7 L655.5,667.5 L657.9,665.8 L660.3,666.7 L662.3,666.3 L664.2,667.4 L666.1,666.6 L668.1,666.6 L670.0,667.6 L672.7,671.3 L675.4,673.0 L678.1,670.0 L680.8,666.7 L683.0,665.1 L685.2,664.2 L687.5,662.7 L689.7,660.4 L691.9,658.7 L694.0,657.4 L696.2,657.1 L698.3,656.0 L700.5,655.1 L702.7,655.7 L705.0,656.9 L707.2,657.4 L709.5,657.7 L711.7,657.5 L713.9,655.1 L716.6,657.7 L718.8,657.2 L720.9,658.2 L723.1,658.5 L725.2,660.0 L727.4,659.5 L729.6,660.1 L731.9,661.1 L734.1,662.8 L736.4,664.0 L739.0,667.0 L741.7,670.3 L744.1,668.6 L746.5,667.4 L748.9,666.7 L751.3,666.4 L753.7,664.2 L756.1,663.1 L758.8,668.4 L761.5,672.1 L763.9,670.1 L766.2,666.9 L768.6,665.8 L770.9,664.7 L773.1,662.1 L775.4,660.1 L777.6,656.8 L779.8,657.6 L781.9,657.3 L784.1,655.6 L786.2,656.1 L788.4,655.9 L790.5,653.7 L792.7,652.5 L794.8,650.1 L797.0,649.2 L799.1,647.9 L801.3,648.4 L803.4,646.3 L805.6,646.9 L807.7,645.6 L809.9,645.2 L812.0,644.7 L814.2,645.5 L816.3,645.2 L818.5,643.9 L820.6,643.4 L824.2,638.9 L826.4,639.0 L828.5,637.4 L830.7,637.4 L832.8,638.5 L835.0,637.1 L837.4,635.2 L839.8,633.0 L842.2,630.8 L844.9,633.6 L847.5,635.3 L849.7,633.6 L851.9,634.1 L854.0,633.2 L856.2,633.2 L858.3,631.7 L861.0,631.4 L863.7,632.6 L866.1,635.7 L868.5,635.9 L870.9,638.9 L873.1,639.3 L875.3,641.4 L877.6,642.7 L879.8,643.4 L882.0,641.2 L884.1,639.3 L886.3,639.4 L888.4,636.4 L890.6,635.3 L893.3,631.0 L896.0,626.4 L898.4,622.7 L900.8,618.4 L903.1,614.7 L905.5,615.5 L907.9,615.9 L910.3,616.5 L912.3,617.8 L914.2,616.6 L916.1,618.0 L918.1,617.4 L920.0,618.3 L922.4,616.6 L924.8,615.7 L927.2,613.8 L929.4,613.1 L931.7,612.9 L933.9,613.7 L936.1,612.9 L938.2,612.6 L940.2,614.1 L942.3,615.9 L944.3,616.6 L946.4,615.2 L948.4,616.1 L950.5,617.4 L952.6,616.9 L954.7,618.3 L956.8,618.2 L958.9,618.2 L960.9,617.1 L963.0,617.4 L965.2,615.9 L967.3,616.7 L969.5,615.7 L971.6,614.8 L973.8,613.8 L976.2,612.5 L978.6,609.4 L981.0,606.6 L983.1,604.3 L985.3,604.8 L987.4,602.4 L989.6,602.0 L991.7,600.4 L995.3,598.6 L998.0,593.2 L1000.7,586.0 L1002.9,584.3 L1005.2,583.4 L1007.4,582.4 L1009.7,582.4 L1011.8,582.9 L1014.0,582.6 L1016.1,583.7 L1018.3,584.3 L1020.4,584.2 L1022.6,583.6 L1024.7,584.5 L1026.9,583.7 L1029.0,584.2 L1031.2,584.2 L1033.2,584.6 L1035.3,583.9 L1037.3,581.8 L1039.4,582.0 L1041.4,581.2 L1043.5,580.0 L1045.5,580.6 L1047.9,579.1 L1050.3,576.7 L1052.7,574.3 L1055.1,571.7 L1057.5,570.7 L1059.9,568.1 L1062.6,570.4 L1065.3,572.6 L1068.0,573.7 L1070.6,575.2 L1074.2,572.6 L1076.4,571.5 L1078.5,571.6 L1080.7,573.4 L1082.8,573.4 L1085.0,572.6 L1087.4,574.4 L1089.8,576.9 L1092.2,577.9 L1094.6,576.9 L1096.9,574.8 L1099.3,574.3 L1101.7,572.3 L1104.1,571.5 L1106.5,570.8 L1108.9,572.5 L1111.3,573.2 L1113.7,573.5 L1115.8,575.0 L1118.0,575.8 L1120.1,575.0 L1122.3,575.8 L1124.4,577.0 L1126.6,576.9 L1128.8,579.1 L1130.9,580.0 L1133.1,579.7 L1135.2,580.6 L1137.6,580.3 L1140.0,578.7 L1142.4,578.8 L1144.5,579.4 L1146.7,578.9 L1148.8,578.8 L1151.0,578.1 L1153.1,577.0 L1155.8,577.0 L1158.5,575.2 L1161.2,577.0 L1162.1,628.1 L1164.1,627.3 L1166.1,629.1 L1168.0,628.5 L1170.0,629.0 L1172.7,630.9 L1175.4,630.8 L1178.1,635.1 L1180.8,638.0 L1183.2,640.3 L1185.5,641.7 L1187.9,642.5 L1190.1,643.1 L1192.2,645.3 L1194.4,644.9 L1196.5,647.6 L1198.7,647.9 L1200.8,648.1 L1203.0,646.2 L1205.2,647.0 L1207.3,645.6 L1209.5,645.2 L1211.6,646.0 L1213.8,648.3 L1215.9,648.4 L1218.1,649.2 L1220.2,651.5 L1222.9,645.4 L1225.6,640.7 L1228.3,643.9 L1231.0,647.9 L1233.1,649.6 L1235.3,650.7 L1237.4,650.1 L1239.6,651.8 L1241.7,652.4 L1243.9,652.5 L1246.0,654.1 L1248.2,653.5 L1250.3,654.8 L1252.5,654.2 L1254.9,655.1 L1257.3,658.8 L1259.7,659.5 L1263.3,652.4 L1265.5,651.4 L1267.7,652.9 L1270.0,651.2 L1272.2,651.5 L1274.5,649.7 L1276.7,649.5 L1278.9,649.3 L1281.2,647.9 L1283.2,647.3 L1285.3,647.9 L1287.3,647.5 L1289.4,647.1 L1291.4,647.4 L1293.5,646.6 L1295.5,647.0 L1297.9,646.2 L1300.3,643.5 L1302.7,643.4 L1305.4,644.3 L1308.1,643.4 L1310.8,647.1 L1313.5,650.6 L1315.7,652.2 L1318.0,653.3 L1320.2,654.3 L1322.4,655.1 L1324.8,657.1 L1327.2,658.9 L1329.6,662.2 L1331.7,663.2 L1333.8,663.0 L1335.9,663.6 L1338.0,665.4 L1340.1,665.7 L1342.2,665.8 L1344.6,666.6 L1346.9,667.8 L1349.3,669.4 L1351.5,670.1 L1353.6,671.0 L1355.8,671.6 L1357.9,672.2 L1360.1,673.9 L1362.5,671.6 L1364.9,670.7 L1367.3,667.6 L1369.7,671.0 L1372.1,674.5 L1374.4,676.6 L1376.8,679.5 L1379.2,681.5 L1381.6,684.6 L1384.0,686.2 L1386.4,686.5 L1388.8,689.1 L1391.2,691.6 L1393.6,694.9 L1396.0,698.1 L1398.4,701.0 L1400.8,703.8 L1403.1,706.2 L1405.5,709.1 L1407.9,712.0 L1410.3,715.1" fill="none" stroke="#ff8a24" stroke-width="3.1" stroke-linejoin="round" clip-path="url(#cclip)"/>
<path d="M170.0,684.6 L172.7,687.0 L175.4,689.1 L178.1,696.8 L180.8,703.5 L183.2,704.9 L185.5,706.1 L187.9,706.2 L191.5,705.3 L194.2,709.3 L196.9,714.2 L199.1,714.1 L201.4,712.1 L203.6,711.4 L205.9,709.7 L208.0,710.0 L210.2,710.0 L212.3,708.2 L214.5,708.0 L216.6,708.0 L219.0,708.7 L221.4,708.7 L223.8,708.9 L226.0,708.7 L228.1,707.1 L230.3,707.7 L232.4,704.9 L234.6,705.3 L237.0,706.4 L239.3,706.2 L241.7,707.1 L244.1,704.2 L246.5,703.9 L248.9,701.7 L251.3,700.7 L253.7,701.1 L256.1,701.7 L258.5,700.1 L260.9,698.5 L263.3,698.1 L265.6,698.0 L268.0,698.3 L270.4,699.9 L272.5,700.3 L274.6,698.4 L276.7,698.2 L278.8,697.8 L280.9,699.3 L283.0,698.1 L285.7,696.8 L288.4,695.4 L290.8,696.7 L293.1,697.6 L295.5,697.2 L297.7,697.0 L299.8,696.6 L302.0,696.4 L304.1,696.0 L306.3,696.3 L308.5,696.9 L310.6,698.0 L312.8,697.4 L314.9,698.3 L317.1,698.1 L319.5,698.3 L321.8,697.6 L324.2,696.3 L326.6,697.0 L329.0,697.0 L331.4,697.2 L333.8,696.9 L336.2,698.1 L338.6,699.0 L341.3,699.3 L344.0,698.1 L347.5,700.8 L351.1,689.1 L353.8,673.3 L356.5,657.7 L359.2,659.0 L361.9,659.5 L364.6,655.9 L367.3,653.3 L369.7,654.0 L372.1,653.8 L374.4,655.1 L376.6,655.0 L378.8,654.3 L380.9,651.8 L383.1,652.5 L385.2,651.5 L387.4,651.0 L389.7,653.3 L391.9,652.1 L394.2,653.3 L396.9,651.1 L399.6,650.6 L401.9,650.5 L404.3,649.0 L406.7,647.9 L409.0,648.1 L411.2,650.5 L413.5,652.6 L415.7,653.3 L417.8,652.5 L420.0,653.3 L422.2,653.1 L424.3,651.4 L426.5,651.0 L428.6,650.2 L430.8,649.7 L432.9,648.0 L435.1,648.0 L437.2,647.6 L439.4,647.1 L441.5,646.1 L443.6,645.5 L445.6,644.1 L447.7,644.4 L449.7,643.1 L451.8,643.8 L453.8,641.4 L455.9,641.6 L457.9,641.4 L460.0,639.2 L462.0,639.4 L464.1,638.2 L466.1,637.7 L468.2,637.4 L470.2,636.2 L472.3,636.0 L474.4,633.3 L476.5,634.4 L478.6,633.0 L480.7,630.9 L482.8,630.8 L484.9,631.0 L487.0,630.9 L489.0,629.7 L491.1,630.5 L493.2,628.6 L495.3,629.0 L497.5,627.9 L499.6,626.3 L501.8,626.5 L503.9,624.3 L506.1,623.7 L508.3,621.8 L510.6,622.1 L512.8,619.4 L515.1,618.3 L517.4,616.7 L519.8,615.7 L522.2,613.8 L524.9,610.4 L527.6,608.4 L530.0,607.9 L532.4,606.4 L534.8,604.8 L536.9,605.5 L539.1,606.9 L541.2,607.8 L543.4,606.8 L545.5,608.4 L547.8,610.3 L550.0,610.3 L552.3,611.7 L554.5,612.0 L556.9,613.6 L559.3,615.4 L561.7,615.6 L563.8,616.4 L566.0,615.4 L568.1,615.4 L570.3,616.1 L572.4,616.5 L574.5,616.1 L576.6,616.2 L578.7,617.0 L580.8,617.1 L582.9,617.0 L585.0,617.4 L587.0,617.8 L589.1,616.4 L591.1,616.9 L593.2,616.7 L595.2,617.0 L597.3,617.4 L599.3,616.5 L601.7,617.6 L604.1,617.2 L606.5,619.2 L609.2,621.6 L611.9,623.7 L614.1,623.1 L616.4,623.0 L618.6,623.2 L620.9,622.8 L622.9,621.9 L625.0,622.9 L627.0,621.7 L629.1,621.4 L631.1,621.6 L633.2,620.2 L635.2,621.0 L637.4,620.6 L639.5,622.1 L641.7,620.1 L643.8,620.7 L646.0,621.0 L648.1,621.4 L650.2,620.6 L652.2,620.8 L654.3,621.1 L656.4,621.0 L658.5,620.1 L660.4,620.2 L662.3,620.3 L664.3,619.9 L666.2,621.8 L668.1,620.8 L670.0,621.9 L672.7,624.0 L675.4,626.4 L677.8,627.3 L680.2,630.5 L682.6,631.7 L684.7,630.7 L686.9,629.1 L689.0,629.2 L691.2,627.2 L693.3,627.3 L695.4,626.3 L697.5,625.6 L699.6,626.0 L701.7,625.1 L703.8,623.6 L705.9,623.7 L708.1,622.2 L710.4,621.3 L712.6,621.0 L714.8,619.2 L717.1,619.1 L719.3,620.2 L721.6,618.9 L723.8,620.1 L726.2,618.6 L728.6,619.5 L731.0,618.3 L733.4,619.8 L735.8,620.9 L738.1,623.7 L741.7,624.6 L745.3,621.0 L747.7,620.9 L750.1,622.0 L752.5,622.8 L756.1,621.0 L759.7,626.4 L762.1,625.7 L764.5,626.7 L766.8,627.3 L769.0,627.1 L771.1,623.8 L773.3,623.2 L775.5,621.8 L777.6,621.0 L779.8,619.5 L781.9,620.5 L784.1,618.3 L786.2,617.4 L788.4,617.4 L790.5,616.5 L792.7,615.0 L794.8,615.2 L797.0,613.8 L799.1,613.8 L801.3,612.9 L803.4,611.2 L805.6,611.9 L807.7,610.2 L809.9,609.3 L812.0,608.9 L814.2,607.3 L816.3,606.2 L818.5,605.9 L820.6,605.7 L822.8,605.2 L824.9,603.6 L827.1,603.4 L829.3,604.5 L831.4,603.0 L833.6,601.5 L835.7,600.2 L837.9,600.5 L840.0,598.3 L842.2,597.7 L844.3,597.8 L846.5,597.7 L848.6,597.7 L850.8,596.7 L852.9,597.7 L855.2,597.2 L857.4,595.5 L859.7,595.8 L861.9,594.1 L864.0,595.3 L866.1,594.1 L868.2,595.3 L870.3,595.7 L872.4,594.1 L874.4,595.0 L876.6,595.1 L878.8,596.9 L880.9,597.4 L883.1,596.5 L885.2,597.7 L887.2,596.7 L889.2,597.8 L891.3,595.7 L893.3,595.6 L895.3,595.3 L897.3,595.2 L899.3,595.2 L901.3,595.0 L903.6,595.1 L905.8,596.1 L908.1,598.7 L910.3,598.6 L912.3,599.4 L914.2,600.3 L916.1,600.8 L918.1,603.2 L920.0,603.0 L922.4,603.0 L924.8,602.4 L927.2,602.1 L929.4,601.1 L931.7,602.2 L933.9,601.1 L936.1,601.2 L938.3,602.5 L940.4,601.2 L942.6,602.5 L944.7,603.3 L946.9,603.0 L949.1,603.5 L951.4,604.5 L953.6,604.8 L955.9,603.9 L958.6,606.6 L961.2,608.4 L963.6,606.9 L966.0,608.2 L968.4,606.6 L970.7,606.9 L972.9,606.8 L975.1,606.9 L977.4,607.5 L979.8,605.9 L982.2,605.7 L984.6,605.7 L986.7,605.1 L988.9,605.2 L991.0,606.4 L993.2,604.9 L995.3,605.7 L997.6,603.2 L999.8,601.9 L1002.0,598.9 L1004.3,597.7 L1006.5,597.8 L1008.8,595.7 L1011.0,596.2 L1013.3,595.9 L1015.4,595.7 L1017.6,596.0 L1019.7,597.8 L1021.9,598.1 L1024.0,598.6 L1026.2,598.4 L1028.3,597.8 L1030.5,597.7 L1032.6,596.9 L1034.8,597.7 L1036.9,597.0 L1039.1,598.4 L1041.2,599.1 L1043.4,598.6 L1045.5,599.5 L1047.9,600.7 L1050.3,601.9 L1052.7,603.0 L1055.1,601.9 L1057.5,600.6 L1059.9,600.4 L1062.1,599.8 L1064.4,598.7 L1066.6,598.2 L1068.9,597.7 L1071.1,599.0 L1073.3,599.2 L1075.6,600.3 L1077.8,600.4 L1080.2,600.4 L1082.6,599.4 L1085.0,598.6 L1087.4,598.5 L1089.8,600.6 L1092.2,600.4 L1094.6,599.8 L1096.9,599.9 L1099.3,598.6 L1101.5,597.4 L1103.6,598.5 L1105.8,598.2 L1107.9,598.6 L1110.1,597.7 L1112.3,598.3 L1114.4,598.7 L1116.6,598.3 L1118.7,599.3 L1120.9,598.6 L1123.0,598.3 L1125.2,596.4 L1127.3,597.4 L1129.5,595.2 L1131.6,595.0 L1134.0,595.8 L1136.4,597.5 L1138.8,599.5 L1140.9,599.5 L1143.0,598.5 L1145.1,597.8 L1147.2,596.5 L1149.3,596.5 L1151.3,595.9 L1153.6,596.4 L1155.8,595.8 L1158.1,595.1 L1160.3,595.0 L1162.3,594.9 L1164.2,593.1 L1166.1,591.9 L1168.1,592.7 L1170.0,591.4 L1172.4,591.4 L1174.8,592.1 L1177.2,594.1 L1179.6,597.5 L1182.0,599.5 L1184.3,602.1 L1186.7,601.1 L1189.1,601.8 L1191.5,602.1 L1193.8,601.4 L1196.0,602.2 L1198.2,602.0 L1200.5,602.1 L1202.7,599.6 L1205.0,594.4 L1207.2,592.2 L1209.5,588.7 L1211.8,590.0 L1214.2,589.7 L1216.6,591.4 L1220.2,595.9 L1222.9,593.4 L1225.6,589.6 L1228.3,593.2 L1231.0,595.0 L1233.1,594.8 L1235.3,594.7 L1237.4,594.7 L1239.6,594.6 L1241.7,593.2 L1243.9,593.3 L1246.0,593.4 L1248.2,593.5 L1250.3,594.4 L1252.5,595.0 L1254.9,596.7 L1257.3,598.4 L1259.7,598.6 L1263.3,586.9 L1265.6,587.7 L1268.0,588.3 L1270.4,588.7 L1272.8,589.9 L1275.2,589.5 L1277.6,591.4 L1279.8,590.2 L1282.1,589.9 L1284.3,591.4 L1286.6,590.5 L1289.3,587.2 L1292.0,582.4 L1293.9,579.4 L1295.9,578.5 L1297.9,574.7 L1299.8,572.9 L1301.8,570.8 L1303.9,572.8 L1306.0,576.0 L1308.1,577.0 L1310.8,579.8 L1313.5,582.4 L1315.7,581.4 L1318.0,583.5 L1320.2,583.2 L1322.4,582.4 L1325.1,584.3 L1327.8,584.2 L1331.4,579.7 L1333.6,581.5 L1335.7,580.2 L1337.9,581.0 L1340.0,581.9 L1342.2,583.3 L1344.6,582.1 L1346.9,580.3 L1349.3,579.7 L1351.7,578.9 L1354.1,580.0 L1356.5,579.7 L1358.9,578.9 L1361.3,576.0 L1363.7,574.3 L1366.4,572.9 L1369.1,572.6 L1371.3,574.0 L1373.6,574.3 L1375.8,574.7 L1378.0,575.2 L1380.4,574.3 L1382.8,575.7 L1385.2,575.2 L1388.8,578.8 L1390.9,577.6 L1393.1,578.8 L1395.3,579.0 L1397.4,578.8 L1399.6,577.9 L1403.1,585.1 L1405.4,588.7 L1407.6,590.3 L1409.9,595.1 L1412.1,597.7" fill="none" stroke="#2caa3a" stroke-width="3.1" stroke-linejoin="round" clip-path="url(#cclip)"/>
<path d="M170.0,587.8 L172.7,586.6 L175.4,586.9 L178.1,589.6 L180.8,591.4 L183.0,593.7 L185.2,595.4 L187.5,596.8 L189.7,599.5 L192.1,599.8 L194.5,599.5 L196.9,598.6 L199.1,596.8 L201.4,595.0 L203.6,596.3 L205.9,597.7 L208.3,596.8 L210.7,596.0 L213.0,596.8 L215.7,595.6 L218.4,595.0 L221.1,597.7 L223.2,595.8 L225.3,592.5 L227.4,591.4 L229.8,590.5 L232.2,587.8 L234.6,586.9 L237.0,586.0 L239.3,585.3 L241.7,586.0 L244.1,587.4 L246.5,587.1 L248.9,586.9 L251.6,586.8 L254.3,585.1 L257.0,585.8 L259.7,586.0 L261.8,584.4 L263.9,584.4 L265.9,584.2 L268.2,589.1 L270.4,594.1 L272.8,593.8 L275.2,596.3 L277.6,595.9 L279.8,596.3 L282.1,596.5 L284.3,598.6 L286.6,598.6 L288.8,598.6 L291.1,601.3 L293.3,601.1 L295.5,602.1 L297.9,600.5 L300.3,598.2 L302.7,596.8 L305.1,596.1 L307.5,594.9 L309.9,595.0 L312.1,594.6 L314.4,597.1 L316.6,596.4 L318.9,597.7 L322.4,591.4 L324.7,591.8 L326.9,590.3 L329.2,591.7 L331.4,590.5 L333.8,591.7 L336.2,591.6 L338.6,591.4 L340.7,590.5 L342.8,588.6 L344.9,586.9 L347.5,591.4 L351.1,591.4 L353.4,583.8 L355.6,575.2 L357.9,573.1 L360.1,572.6 L362.5,571.9 L364.9,572.1 L367.3,570.8 L370.0,571.0 L372.7,572.6 L374.9,572.8 L377.1,572.1 L379.4,570.3 L381.6,569.9 L384.3,570.0 L387.0,570.8 L389.7,572.4 L392.4,574.3 L394.6,573.9 L396.9,575.0 L399.1,573.4 L401.3,573.5 L404.0,570.2 L406.7,569.0 L409.1,568.4 L411.5,570.0 L413.9,569.9 L415.9,571.5 L418.0,571.1 L420.0,571.7 L422.2,571.3 L424.3,571.1 L426.5,571.1 L428.6,569.6 L430.8,569.9 L432.9,569.8 L434.9,569.4 L437.0,569.2 L439.1,568.0 L441.2,567.6 L443.3,568.1 L445.4,568.2 L447.5,569.9 L449.6,569.1 L451.7,570.1 L453.8,569.9 L455.9,570.8 L458.0,570.4 L460.2,570.9 L462.3,573.1 L464.5,573.5 L466.6,573.5 L469.3,575.4 L472.0,577.9 L475.6,583.3 L478.0,584.6 L480.4,585.5 L482.8,586.0 L485.5,588.2 L488.1,588.7 L490.4,589.5 L492.6,588.0 L494.9,589.1 L497.1,587.8 L499.4,588.6 L501.6,587.5 L503.8,588.0 L506.1,586.9 L508.3,586.9 L510.6,586.6 L512.8,586.3 L515.1,586.9 L517.4,587.1 L519.8,585.0 L522.2,585.1 L524.6,585.7 L527.0,588.8 L529.4,589.6 L531.6,590.4 L533.9,590.0 L536.1,591.0 L538.4,590.5 L540.5,589.1 L542.7,589.2 L544.8,588.9 L547.0,588.9 L549.1,588.7 L551.5,588.6 L553.9,588.9 L556.3,590.5 L559.0,591.9 L561.7,594.1 L563.8,595.0 L566.0,595.1 L568.1,594.6 L570.3,594.0 L572.4,594.1 L574.5,593.5 L576.6,595.1 L578.7,594.1 L580.8,594.6 L582.9,593.0 L585.0,594.1 L587.0,593.3 L589.1,594.6 L591.1,594.3 L593.2,594.4 L595.2,593.7 L597.3,593.1 L599.3,593.2 L601.7,594.3 L604.1,595.7 L606.5,595.9 L609.2,596.3 L611.9,597.7 L614.1,597.5 L616.4,596.7 L618.6,597.6 L620.9,596.8 L623.0,595.3 L625.2,596.5 L627.3,596.7 L629.5,594.3 L631.6,595.0 L633.9,595.4 L636.1,595.7 L638.3,596.4 L640.6,595.9 L642.8,596.1 L645.1,595.3 L647.3,595.7 L649.6,595.9 L651.7,597.1 L653.9,597.1 L656.0,595.6 L658.2,595.7 L660.3,596.8 L662.3,596.1 L664.2,596.1 L666.1,597.2 L668.1,596.7 L670.0,597.7 L672.7,599.4 L675.4,599.5 L677.8,603.4 L680.2,605.8 L682.6,610.2 L684.7,609.6 L686.9,608.4 L689.0,608.0 L691.2,606.7 L693.3,606.6 L696.0,607.2 L698.7,609.3 L700.8,608.5 L702.9,608.8 L705.0,609.3 L707.1,608.8 L709.2,607.6 L711.2,608.4 L714.8,600.4 L717.1,601.5 L719.3,602.5 L721.6,603.0 L723.8,603.0 L726.0,604.0 L728.1,602.7 L730.3,604.0 L732.4,603.5 L734.6,604.8 L736.7,606.5 L738.9,606.3 L741.0,608.5 L743.2,608.6 L745.3,610.2 L747.5,611.0 L749.6,610.5 L751.8,610.3 L753.9,611.4 L756.1,612.0 L758.3,612.3 L760.6,614.2 L762.8,613.6 L765.1,614.7 L767.2,614.5 L769.4,614.4 L771.5,615.1 L773.7,613.1 L775.8,613.8 L778.0,613.8 L780.1,613.5 L782.3,613.8 L784.4,614.1 L786.6,612.9 L788.8,612.0 L791.1,612.4 L793.3,611.6 L795.5,611.1 L797.7,611.8 L799.8,611.2 L802.0,613.4 L804.1,614.3 L806.3,613.8 L808.7,614.7 L811.1,615.8 L813.5,617.4 L815.6,619.7 L817.8,619.0 L819.9,620.2 L822.1,621.5 L824.2,623.7 L826.4,624.2 L828.5,623.9 L830.7,623.0 L832.8,623.2 L835.0,622.8 L837.4,621.4 L839.8,622.5 L842.2,621.9 L844.3,622.3 L846.5,623.0 L848.6,623.2 L850.8,623.8 L852.9,624.6 L855.1,624.1 L857.2,623.9 L859.4,625.0 L861.5,624.7 L863.7,625.5 L865.8,625.9 L867.9,626.2 L870.0,626.0 L872.1,625.4 L874.1,624.9 L876.2,625.5 L878.5,624.5 L880.7,624.1 L883.0,623.7 L885.2,622.8 L887.4,623.6 L889.7,621.4 L891.9,622.1 L894.2,621.9 L896.6,622.8 L899.0,624.1 L901.3,624.6 L903.7,626.9 L906.1,628.2 L908.5,629.0 L910.4,630.1 L912.3,631.1 L914.3,631.7 L916.2,632.8 L918.1,633.2 L920.0,633.5 L922.4,635.1 L924.8,635.4 L927.2,637.1 L929.4,637.8 L931.7,636.4 L933.9,636.7 L936.1,636.2 L938.3,637.3 L940.4,638.0 L942.6,638.4 L944.7,636.6 L946.9,638.0 L949.1,638.0 L951.4,638.5 L953.6,639.1 L955.9,639.8 L958.6,640.4 L961.2,642.5 L963.5,642.4 L965.7,641.1 L968.0,641.4 L970.2,641.6 L972.4,643.7 L974.5,644.3 L976.7,644.7 L978.8,645.0 L981.0,647.0 L983.2,649.1 L985.5,649.7 L987.7,649.7 L989.9,651.5 L992.3,653.2 L994.7,656.0 L997.1,657.7 L999.4,658.1 L1001.6,657.2 L1003.8,658.7 L1006.1,657.7 L1008.2,657.9 L1010.4,658.3 L1012.5,660.1 L1014.7,659.1 L1016.8,660.4 L1019.0,661.2 L1021.1,660.5 L1023.3,661.7 L1025.5,661.4 L1027.6,662.2 L1029.7,662.1 L1031.7,663.4 L1033.8,662.5 L1035.8,662.6 L1037.9,663.1 L1039.9,662.5 L1042.0,663.1 L1044.2,664.0 L1046.4,666.0 L1048.7,667.3 L1050.9,669.4 L1053.1,666.9 L1055.2,666.8 L1057.4,663.0 L1059.5,662.9 L1061.7,660.4 L1064.1,661.1 L1066.5,660.3 L1068.9,659.5 L1071.1,660.3 L1073.3,663.1 L1075.6,663.9 L1077.8,666.7 L1080.0,667.1 L1082.1,667.5 L1084.3,666.7 L1086.4,666.3 L1088.6,667.6 L1090.7,668.4 L1092.9,668.1 L1095.0,669.3 L1097.2,670.4 L1099.3,671.2 L1101.5,672.2 L1103.6,671.3 L1105.8,670.9 L1107.9,672.5 L1110.1,672.1 L1112.2,672.6 L1114.3,671.9 L1116.4,670.6 L1118.5,670.8 L1120.6,671.1 L1122.7,671.2 L1124.9,669.5 L1127.1,667.0 L1129.4,666.5 L1131.6,664.0 L1134.0,666.9 L1136.4,669.1 L1138.8,670.3 L1140.9,671.9 L1143.0,670.7 L1145.1,672.7 L1147.2,672.4 L1149.3,674.9 L1151.3,674.8 L1153.5,676.0 L1155.7,676.8 L1157.8,676.2 L1160.0,676.7 L1162.1,678.4 L1164.1,679.1 L1166.1,678.6 L1168.0,678.6 L1170.0,678.4 L1172.2,679.0 L1174.3,680.5 L1176.5,680.2 L1178.6,680.7 L1180.8,682.0 L1183.2,682.8 L1185.5,683.9 L1187.9,685.5 L1190.3,687.0 L1192.7,688.8 L1195.1,689.1 L1197.5,689.4 L1199.9,690.6 L1202.3,692.7 L1204.5,692.1 L1206.8,691.8 L1209.0,690.0 L1211.2,690.0 L1213.5,690.2 L1215.7,690.4 L1218.0,691.0 L1220.2,692.7 L1222.6,693.0 L1225.0,693.7 L1227.4,693.6 L1231.0,699.0 L1233.4,697.2 L1235.8,694.1 L1238.1,692.7 L1241.7,690.0 L1244.1,690.9 L1246.5,694.6 L1248.9,695.4 L1251.3,696.4 L1253.7,697.0 L1256.1,698.1 L1258.5,697.9 L1260.9,697.4 L1263.3,696.3 L1265.6,697.8 L1268.0,698.4 L1270.4,700.8 L1272.8,704.5 L1275.2,706.1 L1277.6,709.7 L1279.8,709.0 L1282.1,709.9 L1284.3,710.5 L1286.6,710.6 L1289.0,708.5 L1291.4,705.1 L1293.7,703.5 L1295.8,701.5 L1297.8,698.5 L1299.8,695.3 L1301.8,693.6 L1303.9,696.8 L1306.0,699.1 L1308.1,700.8 L1310.3,702.3 L1312.6,702.5 L1314.8,702.2 L1317.1,703.5 L1319.2,704.4 L1321.4,705.1 L1323.5,704.6 L1325.7,705.8 L1327.8,705.3 L1330.1,707.0 L1332.3,706.4 L1334.5,708.3 L1336.8,708.0 L1340.4,714.2 L1342.6,714.7 L1344.9,714.0 L1347.1,711.8 L1349.3,712.4 L1351.5,711.6 L1353.6,711.6 L1355.8,711.1 L1357.9,710.8 L1360.1,709.7 L1362.5,708.9 L1364.9,706.6 L1367.3,706.2 L1369.7,708.3 L1372.1,708.6 L1374.4,709.7 L1376.6,711.1 L1378.8,710.2 L1380.9,712.5 L1383.1,712.0 L1385.2,712.4 L1387.4,713.2 L1389.5,713.3 L1391.7,713.8 L1393.8,712.9 L1396.0,713.3 L1398.4,712.1 L1400.8,712.5 L1403.1,712.4 L1406.7,707.1 L1409.4,707.7 L1412.1,709.7" fill="none" stroke="#e2343c" stroke-width="3.1" stroke-linejoin="round" clip-path="url(#cclip)"/>
<path d="M170.0,596.8 L172.7,597.1 L175.4,596.8 L178.1,598.4 L180.8,602.1 L184.3,600.4 L186.7,600.8 L189.1,601.5 L191.5,603.0 L194.2,610.7 L196.9,617.4 L198.7,623.7 L201.4,627.2 L204.1,629.9 L206.8,631.7 L209.5,631.7 L211.8,629.6 L214.2,629.2 L216.6,628.1 L219.0,625.0 L221.4,623.3 L223.8,621.9 L226.0,620.8 L228.1,618.7 L230.3,618.0 L232.4,617.9 L234.6,616.5 L237.0,617.2 L239.3,617.1 L241.7,618.3 L244.1,618.2 L246.5,618.4 L248.9,617.4 L251.3,616.6 L253.7,618.7 L256.1,618.3 L258.3,618.7 L260.6,617.9 L262.8,617.5 L265.1,618.3 L267.7,622.0 L270.4,623.7 L272.8,623.9 L275.2,624.0 L277.6,625.5 L280.0,625.8 L282.4,628.6 L284.8,629.0 L286.9,629.8 L289.1,630.8 L291.2,631.2 L293.4,631.3 L295.5,631.7 L297.9,632.5 L300.3,630.9 L302.7,630.8 L305.0,629.2 L307.2,628.0 L309.4,625.7 L311.7,623.7 L314.1,625.1 L316.5,625.0 L318.9,625.5 L321.5,623.2 L324.2,620.1 L326.6,617.9 L329.0,617.1 L331.4,616.5 L333.8,615.1 L336.2,613.8 L338.6,613.8 L341.0,611.4 L343.4,609.3 L345.8,608.4 L348.4,603.0 L351.1,598.6 L354.7,577.9 L357.4,577.3 L360.1,576.1 L362.5,576.4 L364.9,577.1 L367.3,577.9 L369.5,576.6 L371.8,576.1 L374.0,576.9 L376.2,575.2 L378.5,575.6 L380.7,575.5 L383.0,574.5 L385.2,575.2 L387.6,577.2 L390.0,577.5 L392.4,579.7 L394.6,579.0 L396.9,579.9 L399.1,578.7 L401.3,577.9 L404.0,575.8 L406.7,573.5 L409.1,573.6 L411.5,573.6 L413.9,572.6 L415.9,573.2 L418.0,572.0 L420.0,572.6 L422.2,571.3 L424.3,571.8 L426.5,571.5 L428.6,571.2 L430.8,571.7 L432.9,572.0 L434.9,571.3 L437.0,569.5 L439.1,569.6 L441.2,568.4 L443.3,568.1 L445.4,569.4 L447.5,568.9 L449.6,568.9 L451.7,569.3 L453.8,570.4 L455.9,570.8 L458.0,570.8 L460.2,572.0 L462.3,573.2 L464.5,572.7 L466.6,573.5 L469.3,575.1 L472.0,577.9 L474.7,588.0 L477.4,595.9 L481.0,604.8 L484.6,606.6 L488.1,615.6 L490.4,616.3 L492.6,616.0 L494.9,616.6 L497.1,618.3 L499.5,615.3 L501.9,614.4 L504.3,612.0 L506.5,612.0 L508.8,610.5 L511.0,609.0 L513.3,609.3 L515.1,613.8 L517.7,612.2 L520.4,611.1 L523.1,615.3 L525.8,617.4 L529.4,629.9 L532.1,629.1 L534.8,628.1 L538.4,631.7 L541.1,627.4 L543.7,621.0 L546.1,621.2 L548.5,618.7 L550.9,619.2 L553.1,620.9 L555.2,622.1 L557.4,623.0 L559.5,623.7 L561.7,625.5 L563.8,625.4 L566.0,623.9 L568.1,624.2 L570.3,623.9 L572.4,623.7 L574.5,625.0 L576.6,625.1 L578.7,624.0 L580.8,624.9 L582.9,624.5 L585.0,625.5 L587.0,626.6 L589.1,626.8 L591.1,625.8 L593.2,626.8 L595.2,627.0 L597.3,626.2 L599.3,627.3 L601.4,628.1 L603.4,627.9 L605.5,628.6 L607.5,628.3 L609.6,627.4 L611.6,628.4 L613.7,629.0 L615.8,627.7 L617.9,629.4 L620.0,629.0 L622.1,628.6 L624.1,627.1 L626.2,627.3 L628.5,624.9 L630.7,625.4 L633.0,624.2 L635.2,621.9 L637.4,621.1 L639.5,622.2 L641.7,621.5 L643.8,623.2 L646.0,622.8 L648.4,624.0 L650.8,623.1 L653.1,624.6 L655.5,623.3 L657.9,622.3 L660.3,621.0 L662.3,621.5 L664.2,623.9 L666.1,624.0 L668.1,624.6 L670.0,626.4 L672.7,626.9 L675.4,627.3 L677.8,631.3 L680.2,633.8 L682.6,638.0 L684.8,636.9 L687.0,637.8 L689.3,636.3 L691.5,635.3 L693.9,636.7 L696.3,638.4 L698.7,639.8 L700.8,638.7 L702.9,638.6 L705.0,638.6 L707.1,638.8 L709.2,637.7 L711.2,638.0 L714.8,625.5 L717.1,624.6 L719.3,624.1 L721.6,625.1 L723.8,624.6 L726.0,624.1 L728.1,625.8 L730.3,625.9 L732.4,624.3 L734.6,625.5 L736.7,625.2 L738.9,626.5 L741.0,625.9 L743.2,626.1 L745.3,627.3 L747.5,628.6 L749.6,628.1 L751.8,628.3 L753.9,629.3 L756.1,629.0 L758.3,629.9 L760.6,628.8 L762.8,628.8 L765.1,629.9 L767.1,629.5 L769.2,629.2 L771.3,629.0 L773.4,629.3 L775.5,628.8 L777.6,628.1 L779.8,629.2 L781.9,627.3 L784.1,627.9 L786.2,627.8 L788.4,628.1 L790.4,629.1 L792.5,627.9 L794.5,627.9 L796.6,628.5 L798.6,628.6 L800.7,628.4 L802.7,629.0 L804.9,629.8 L807.0,632.5 L809.2,632.7 L811.3,634.9 L813.5,635.3 L815.9,636.9 L818.3,637.3 L820.6,639.8 L822.8,640.4 L824.9,639.5 L827.1,639.2 L829.3,638.6 L831.4,637.1 L833.6,637.9 L835.7,636.4 L837.9,637.1 L840.0,636.5 L842.2,637.1 L844.3,636.9 L846.5,636.1 L848.6,636.8 L850.8,638.2 L852.9,637.1 L855.1,636.2 L857.2,637.0 L859.4,635.9 L861.5,635.5 L863.7,635.3 L866.1,637.2 L868.5,638.2 L870.9,638.0 L873.3,638.4 L875.6,639.1 L878.0,638.9 L880.4,637.3 L882.8,636.7 L885.2,636.2 L887.4,636.4 L889.5,634.6 L891.7,633.6 L893.8,633.2 L896.0,631.7 L898.4,629.6 L900.8,629.5 L903.1,628.1 L905.5,628.5 L907.9,629.5 L910.3,629.0 L912.3,628.3 L914.2,630.1 L916.1,628.1 L918.1,628.4 L920.0,629.0 L922.4,629.3 L924.8,629.4 L927.2,629.0 L929.4,628.5 L931.7,628.2 L933.9,629.9 L936.1,629.0 L938.3,628.8 L940.4,630.0 L942.6,630.4 L944.7,630.3 L946.9,630.8 L949.1,631.7 L951.4,632.2 L953.6,633.8 L955.9,633.5 L958.6,634.7 L961.2,637.1 L963.4,637.6 L965.6,636.5 L967.7,636.9 L969.9,637.5 L972.0,637.1 L974.2,636.7 L976.3,636.7 L978.5,637.7 L980.6,636.2 L982.8,637.1 L985.5,639.3 L988.1,641.6 L990.8,647.6 L993.5,651.5 L997.1,666.7 L999.5,666.9 L1001.9,664.0 L1004.3,664.0 L1006.4,664.0 L1008.5,664.7 L1010.6,666.8 L1012.7,667.2 L1014.8,667.8 L1016.8,667.6 L1019.0,667.7 L1021.1,667.6 L1023.3,669.4 L1025.5,669.5 L1027.6,669.4 L1029.7,670.0 L1031.7,671.2 L1033.8,670.9 L1035.8,669.9 L1037.9,672.0 L1039.9,671.3 L1042.0,672.1 L1044.1,674.1 L1046.3,676.3 L1048.4,676.1 L1050.6,677.7 L1052.7,680.2 L1055.0,678.2 L1057.2,678.0 L1059.4,676.3 L1061.7,675.7 L1064.1,675.6 L1066.5,675.6 L1068.9,674.8 L1071.2,678.0 L1073.6,682.8 L1076.0,686.4 L1078.1,686.1 L1080.2,686.7 L1082.3,687.8 L1084.4,687.8 L1086.5,686.3 L1088.6,687.3 L1091.0,686.9 L1093.4,686.2 L1095.8,686.4 L1097.9,685.7 L1100.1,687.7 L1102.2,687.8 L1104.4,687.3 L1106.5,688.2 L1108.5,688.8 L1110.5,688.3 L1112.6,688.1 L1114.6,687.1 L1116.6,687.3 L1118.6,689.1 L1120.6,689.1 L1122.7,688.2 L1124.9,686.8 L1127.1,685.8 L1129.4,683.7 L1131.6,682.0 L1134.0,682.7 L1136.4,684.1 L1138.8,686.4 L1140.9,686.8 L1143.0,688.8 L1145.1,689.3 L1147.2,690.2 L1149.3,691.0 L1151.3,690.9 L1153.5,691.0 L1155.7,691.8 L1157.8,692.2 L1160.0,694.4 L1162.1,694.5 L1164.1,695.4 L1166.1,694.3 L1168.0,694.8 L1170.0,694.5 L1172.2,694.1 L1174.3,696.2 L1176.5,696.4 L1178.6,697.0 L1180.8,696.3 L1183.0,697.2 L1185.2,697.6 L1187.5,695.9 L1189.7,697.2 L1193.3,703.5 L1196.9,712.4 L1199.3,712.7 L1201.7,711.5 L1204.1,711.5 L1206.5,709.8 L1208.9,706.8 L1211.2,703.5 L1213.5,705.6 L1215.7,706.8 L1218.0,707.0 L1220.2,708.9 L1222.6,707.7 L1225.0,704.4 L1227.4,703.5 L1229.8,704.6 L1232.2,704.9 L1234.6,704.4 L1238.1,698.1 L1240.3,697.5 L1242.5,698.8 L1244.6,698.0 L1246.8,697.7 L1248.9,698.1 L1251.3,699.3 L1253.7,698.7 L1256.1,699.9 L1258.5,694.7 L1260.9,690.8 L1263.3,687.3 L1266.8,696.3 L1270.4,693.6 L1273.1,693.2 L1275.8,693.6 L1277.6,708.0 L1279.8,709.0 L1282.1,709.4 L1284.3,708.1 L1286.6,708.9 L1289.0,705.0 L1291.4,700.3 L1293.7,696.3 L1295.8,694.2 L1297.8,690.1 L1299.8,687.8 L1301.8,683.7 L1304.1,687.4 L1306.3,692.7 L1308.7,694.9 L1311.1,694.4 L1313.5,696.3 L1315.6,697.0 L1317.8,695.1 L1319.9,694.4 L1322.1,694.7 L1324.2,694.5 L1326.4,694.8 L1328.5,693.7 L1330.7,694.2 L1332.8,693.8 L1335.0,693.6 L1338.6,705.3 L1340.4,712.4 L1342.6,711.7 L1344.9,711.7 L1347.1,710.6 L1349.3,710.6 L1351.5,710.7 L1353.6,708.8 L1355.8,710.5 L1357.9,709.3 L1360.1,708.9 L1362.5,708.4 L1364.9,707.6 L1367.3,706.2 L1369.7,708.6 L1372.1,710.0 L1374.4,712.4 L1376.6,711.7 L1378.8,713.2 L1380.9,712.6 L1383.1,712.7 L1385.2,713.3 L1387.4,714.1 L1389.5,713.8 L1391.7,712.9 L1393.8,712.9 L1396.0,713.3 L1398.4,713.4 L1400.8,713.7 L1403.1,714.2 L1406.7,707.1 L1409.4,707.5 L1412.1,708.9" fill="none" stroke="#a070cc" stroke-width="3.1" stroke-linejoin="round" clip-path="url(#cclip)"/>
<path d="M170.0,693.6 L320.6,693.6 L322.4,714.2 L324.2,702.6 L334.1,702.6 L335.9,685.5 L356.5,685.5 L358.3,673.9 L420.0,674.2 L472.9,674.2 L475.6,663.5 L670.0,663.7 L712.1,663.7 L713.9,650.6 L764.2,650.6 L765.9,663.7 L881.6,663.7 L883.4,648.8 L920.0,648.2 L957.7,648.2 L958.6,635.0 L1170.0,635.0 L1261.5,635.0 L1263.3,608.4 L1289.3,608.4 L1291.1,568.1 L1351.1,568.1 L1352.9,580.6 L1412.1,580.6" fill="none" stroke="#9a6058" stroke-width="3.1" stroke-linejoin="round" clip-path="url(#cclip)"/>
<line x1="1419.5" y1="721.3" x2="1423.5" y2="721.3" stroke="#8a8a8a" stroke-width="1"/>
<line x1="1419.5" y1="715.4" x2="1425.5" y2="715.4" stroke="#8a8a8a" stroke-width="1"/>
<line x1="1419.5" y1="709.5" x2="1423.5" y2="709.5" stroke="#8a8a8a" stroke-width="1"/>
<line x1="1419.5" y1="703.7" x2="1423.5" y2="703.7" stroke="#8a8a8a" stroke-width="1"/>
<line x1="1419.5" y1="697.8" x2="1423.5" y2="697.8" stroke="#8a8a8a" stroke-width="1"/>
<line x1="1419.5" y1="691.9" x2="1423.5" y2="691.9" stroke="#8a8a8a" stroke-width="1"/>
<line x1="1419.5" y1="686.1" x2="1425.5" y2="686.1" stroke="#8a8a8a" stroke-width="1"/>
<line x1="1419.5" y1="680.2" x2="1423.5" y2="680.2" stroke="#8a8a8a" stroke-width="1"/>
<line x1="1419.5" y1="674.3" x2="1423.5" y2="674.3" stroke="#8a8a8a" stroke-width="1"/>
<line x1="1419.5" y1="668.5" x2="1423.5" y2="668.5" stroke="#8a8a8a" stroke-width="1"/>
<line x1="1419.5" y1="662.6" x2="1423.5" y2="662.6" stroke="#8a8a8a" stroke-width="1"/>
<line x1="1419.5" y1="656.7" x2="1425.5" y2="656.7" stroke="#8a8a8a" stroke-width="1"/>
<line x1="1419.5" y1="650.9" x2="1423.5" y2="650.9" stroke="#8a8a8a" stroke-width="1"/>
<line x1="1419.5" y1="645.0" x2="1423.5" y2="645.0" stroke="#8a8a8a" stroke-width="1"/>
<line x1="1419.5" y1="639.1" x2="1423.5" y2="639.1" stroke="#8a8a8a" stroke-width="1"/>
<line x1="1419.5" y1="633.2" x2="1423.5" y2="633.2" stroke="#8a8a8a" stroke-width="1"/>
<line x1="1419.5" y1="627.4" x2="1425.5" y2="627.4" stroke="#8a8a8a" stroke-width="1"/>
<line x1="1419.5" y1="621.5" x2="1423.5" y2="621.5" stroke="#8a8a8a" stroke-width="1"/>
<line x1="1419.5" y1="615.6" x2="1423.5" y2="615.6" stroke="#8a8a8a" stroke-width="1"/>
<line x1="1419.5" y1="609.8" x2="1423.5" y2="609.8" stroke="#8a8a8a" stroke-width="1"/>
<line x1="1419.5" y1="603.9" x2="1423.5" y2="603.9" stroke="#8a8a8a" stroke-width="1"/>
<line x1="1419.5" y1="598.0" x2="1425.5" y2="598.0" stroke="#8a8a8a" stroke-width="1"/>
<line x1="1419.5" y1="592.2" x2="1423.5" y2="592.2" stroke="#8a8a8a" stroke-width="1"/>
<line x1="1419.5" y1="586.3" x2="1423.5" y2="586.3" stroke="#8a8a8a" stroke-width="1"/>
<line x1="1419.5" y1="580.4" x2="1423.5" y2="580.4" stroke="#8a8a8a" stroke-width="1"/>
<line x1="1419.5" y1="574.6" x2="1423.5" y2="574.6" stroke="#8a8a8a" stroke-width="1"/>
<line x1="1419.5" y1="568.7" x2="1425.5" y2="568.7" stroke="#8a8a8a" stroke-width="1"/>
<line x1="1419.5" y1="562.8" x2="1423.5" y2="562.8" stroke="#8a8a8a" stroke-width="1"/>
<text x="1441.5" y="572.7" font-size="11.3" fill="#eeeeee">1.00</text>
<text x="1441.5" y="602.6" font-size="11.3" fill="#eeeeee">800.00 m</text>
<text x="1441.5" y="631.5" font-size="11.3" fill="#eeeeee">600.00 m</text>
<text x="1441.5" y="660.6" font-size="11.3" fill="#eeeeee">400.00 m</text>
<text x="1441.5" y="689.7" font-size="11.3" fill="#eeeeee">200.00 m</text>
<text x="1441.5" y="719.4" font-size="11.3" fill="#eeeeee">0.00</text>
<g clip-path="url(#tclip)"><text transform="translate(1507,735) rotate(90)" font-size="16.3" fill="#eeeeee" text-anchor="end" textLength="186" lengthAdjust="spacingAndGlyphs">Normalized CVD (arb. u.)</text></g>
<text x="795" y="779.2" font-size="15.6" fill="#eeeeee" text-anchor="middle">Date (UTC)</text>
<line x1="180.5" y1="826.5" x2="196.0" y2="826.5" stroke="#3386c8" stroke-width="3.2"/>
<text x="203.5" y="829.4" font-size="10.45" fill="#eeeeee">All Orders</text>
<line x1="265" y1="826.5" x2="280.5" y2="826.5" stroke="#ff8a24" stroke-width="3.2"/>
<text x="287.7" y="829.4" font-size="10.45" fill="#eeeeee">$100 to $1k</text>
<line x1="357.2" y1="826.5" x2="372.7" y2="826.5" stroke="#2caa3a" stroke-width="3.2"/>
<text x="380" y="829.4" font-size="10.45" fill="#eeeeee">$1k to $10k</text>
<line x1="180.5" y1="886.3" x2="196.0" y2="886.3" stroke="#e2343c" stroke-width="3.2"/>
<text x="203.5" y="889.2" font-size="10.45" fill="#eeeeee">$10k to $100k</text>
<line x1="284" y1="886.3" x2="299.5" y2="886.3" stroke="#a070cc" stroke-width="3.2"/>
<text x="306.8" y="889.2" font-size="10.45" fill="#eeeeee">$100k to $1M</text>
<line x1="385" y1="886.3" x2="400.5" y2="886.3" stroke="#9a6058" stroke-width="3.2"/>
<text x="408" y="889.2" font-size="10.45" fill="#eeeeee">$1M to $10M</text>
<rect x="1526.3" y="230.6" width="3" height="30" rx="1.5" fill="#5cb5aa"/>
<rect x="1526.3" y="383.8" width="3" height="60" rx="1.5" fill="#5cb5aa"/>
<rect x="1537" y="290.8" width="10" height="1.4" fill="#a8a8a8"/>
<rect x="1537" y="321.5" width="10" height="1.4" fill="#a8a8a8"/>
<rect x="1537" y="382.90000000000003" width="10" height="1.4" fill="#a8a8a8"/>
<rect x="-3.2" y="-3.2" width="6.4" height="6.4" fill="#1fb5e8" transform="translate(1546.87,210.93) rotate(-23.0)"/>
<rect x="-3.2" y="-3.2" width="6.4" height="6.4" fill="#4a7fe0" transform="translate(1548.80,215.60) rotate(22.0)"/>
<rect x="-3.2" y="-3.2" width="6.4" height="6.4" fill="#b43fd0" transform="translate(1546.87,220.27) rotate(67.0)"/>
<rect x="-3.2" y="-3.2" width="6.4" height="6.4" fill="#e8245e" transform="translate(1542.20,222.20) rotate(112.0)"/>
<rect x="-3.2" y="-3.2" width="6.4" height="6.4" fill="#ff4a3a" transform="translate(1537.53,220.27) rotate(157.0)"/>
<rect x="-3.2" y="-3.2" width="6.4" height="6.4" fill="#ff9a1a" transform="translate(1535.60,215.60) rotate(202.0)"/>
<rect x="-3.2" y="-3.2" width="6.4" height="6.4" fill="#b0d82a" transform="translate(1537.53,210.93) rotate(247.0)"/>
<rect x="-3.2" y="-3.2" width="6.4" height="6.4" fill="#20c080" transform="translate(1542.20,209.00) rotate(292.0)"/>
<circle cx="1542.2" cy="215.6" r="4" fill="#222222"/>
<path transform="translate(1542,245.6)" fill="#a8a8a8" d="M0,-9 L-4.2,-4.8 L-1.6,-4.8 L-1.6,-1.6 L-4.8,-1.6 L-4.8,-4.2 L-9,0 L-4.8,4.2 L-4.8,1.6 L-1.6,1.6 L-1.6,4.8 L-4.2,4.8 L0,9 L4.2,4.8 L1.6,4.8 L1.6,1.6 L4.8,1.6 L4.8,4.2 L9,0 L4.8,-4.2 L4.8,-1.6 L1.6,-1.6 L1.6,-4.8 L4.2,-4.8 Z"/>
<rect x="1533.5" y="267.5" width="17.5" height="17" fill="none" stroke="#a8a8a8" stroke-width="1.2" stroke-dasharray="2.2 1.6"/>
<circle cx="1546" cy="272" r="4.4" fill="#222222" stroke="#a8a8a8" stroke-width="1.8"/>
<line x1="1542.8" y1="275.4" x2="1536.5" y2="281.6" stroke="#a8a8a8" stroke-width="2" stroke-linecap="round"/>
<ellipse cx="1537.5" cy="307.4" rx="3.9" ry="5.8" fill="none" stroke="#a8a8a8" stroke-width="1.6"/>
<rect x="1536" y="305.2" width="3" height="1.1" fill="#a8a8a8"/><rect x="1536" y="308.4" width="3" height="1.1" fill="#a8a8a8"/>
<circle cx="1546.3" cy="304.6" r="4" fill="none" stroke="#a8a8a8" stroke-width="1.7"/>
<line x1="1544.2" y1="308.4" x2="1541.8" y2="313.5" stroke="#a8a8a8" stroke-width="1.8" stroke-linecap="round"/>
<path d="M1536.01,336.40 A6.2,6.2 0 0 1 1547.08,334.44" fill="none" stroke="#a8a8a8" stroke-width="1.9"/>
<path d="M1549.54,332.72 L1549.14,337.39 L1544.62,336.16 Z" fill="#a8a8a8"/>
<path d="M1547.99,339.60 A6.2,6.2 0 0 1 1536.92,341.56" fill="none" stroke="#a8a8a8" stroke-width="1.9"/>
<path d="M1534.46,343.28 L1534.86,338.61 L1539.38,339.84 Z" fill="#a8a8a8"/>
<path d="M1533.8,359.3 L1550.2,359.3 L1550.2,376.2 L1533.8,376.2 Z" fill="none" stroke="#a8a8a8" stroke-width="1.5"/>
<path d="M1537.5,359.3 L1537.5,365.5 L1546.8,365.5 L1546.8,359.3" fill="none" stroke="#a8a8a8" stroke-width="1.5"/>
<rect x="1543.8" y="360.6" width="1.6" height="3.4" fill="#a8a8a8"/>
<path d="M1536.5,376.2 L1536.5,370 L1547.5,370 L1547.5,376.2" fill="none" stroke="#a8a8a8" stroke-width="1.2" opacity="0"/>
<path d="M1536.4,392.3 L1547.6,392.3 Q1549,392.3 1549,393.7 L1549,401.6 Q1549,403 1547.6,403 L1545,403 L1542,406.8 L1539,403 L1536.4,403 Q1535,403 1535,401.6 L1535,393.7 Q1535,392.3 1536.4,392.3 Z" fill="none" stroke="#a8a8a8" stroke-width="1.5"/>
<rect x="1537.5" y="395.2" width="9" height="1.2" fill="#a8a8a8"/>
<rect x="1537.5" y="397.59999999999997" width="9" height="1.2" fill="#a8a8a8"/>
<rect x="1537.5" y="400.0" width="9" height="1.2" fill="#a8a8a8"/>
<circle cx="1542" cy="428.8" r="7.3" fill="none" stroke="#a8a8a8" stroke-width="1.8"/>
<line x1="1542.0" y1="421.6" x2="1542.0" y2="425.2" stroke="#a8a8a8" stroke-width="1.8"/>
<line x1="1542.0" y1="436.0" x2="1542.0" y2="432.4" stroke="#a8a8a8" stroke-width="1.8"/>
<line x1="1534.8" y1="428.8" x2="1538.4" y2="428.8" stroke="#a8a8a8" stroke-width="1.8"/>
<line x1="1549.2" y1="428.8" x2="1545.6" y2="428.8" stroke="#a8a8a8" stroke-width="1.8"/>
</svg></body></html>
